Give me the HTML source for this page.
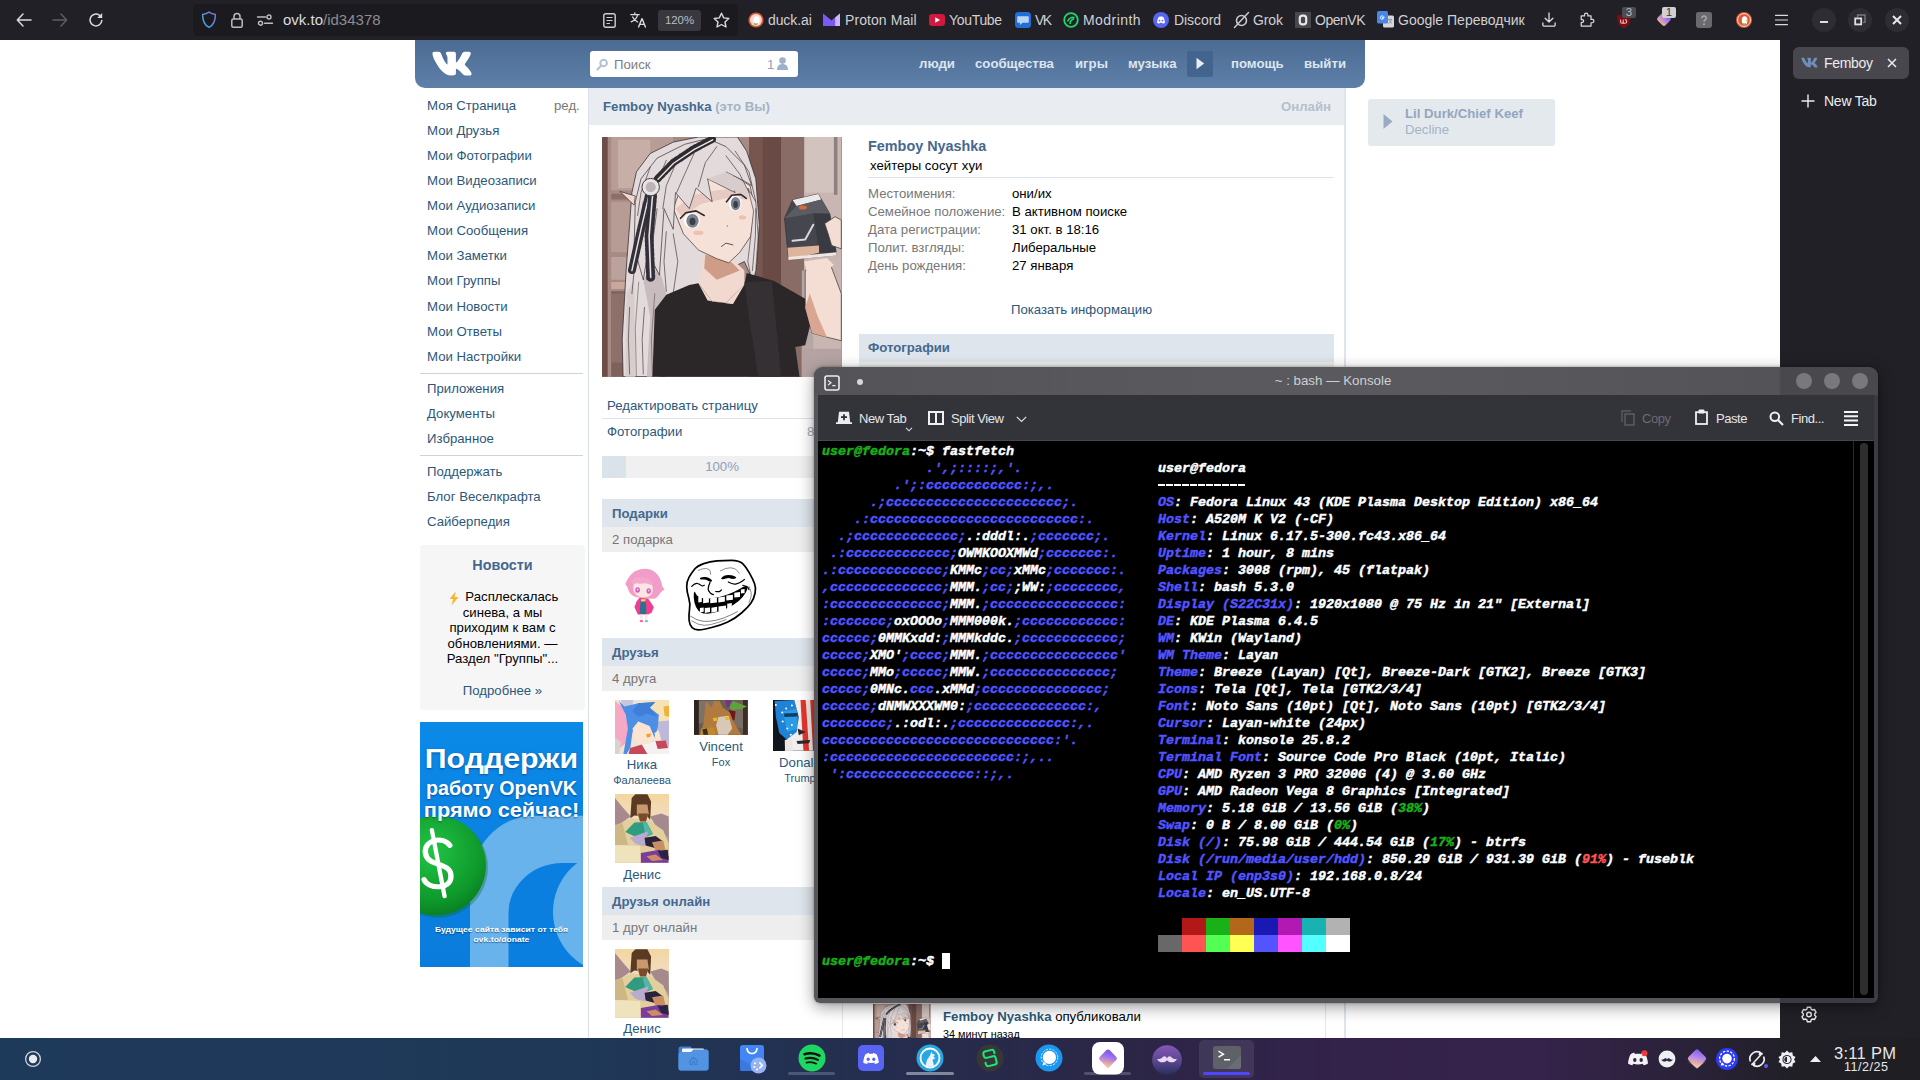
<!DOCTYPE html>
<html><head><meta charset="utf-8"><title>ovk</title>
<style>
*{box-sizing:border-box;margin:0;padding:0}
html,body{width:1920px;height:1080px;overflow:hidden;background:#fff;font-family:"Liberation Sans",sans-serif}
.a{position:absolute;white-space:pre}
svg{position:absolute;overflow:visible}
/* ---------- firefox chrome ---------- */
#ff{position:absolute;left:0;top:0;width:1920px;height:40px;background:#212026;color:#d4d4d8;font-size:14.6px}
#url{position:absolute;left:193px;top:4px;width:545px;height:32px;border-radius:5px;background:#1b1a1f}
#ff .bm{position:absolute;top:11px;white-space:pre;color:#d0d0d5;font-size:14px;line-height:18px}
#side{position:absolute;left:1780px;top:40px;width:140px;height:998px;background:#212026}
/* ---------- page ---------- */
#page{position:absolute;left:0;top:40px;width:1780px;height:998px;background:#fff;overflow:hidden;font-size:13.2px;color:#000}
#page .a{line-height:16px;margin-top:1px}
#hd{position:absolute;left:415px;top:0;width:950px;height:48px;border-radius:0 0 10px 10px;background:linear-gradient(#4c6b93,#5d80a9)}
#hd .n{position:absolute;top:16px;font-weight:700;color:#dde6f0;white-space:pre;line-height:16px}
.lnk{color:#2b587a}
.sb{position:absolute;left:427px;color:#2b587a;white-space:pre;line-height:16px;margin-top:1px}
.gr{color:#777}
.hdr{position:absolute;background:#dee5ec;color:#45688e;font-weight:700;line-height:16px}
.sub{position:absolute;background:#eeeeee;color:#777;line-height:16px}
/* ---------- konsole ---------- */
#kon{position:absolute;left:814px;top:367px;width:1064px;height:636px;border-radius:9px 9px 6px 6px;background:linear-gradient(90deg,#56565b 0,#56565b 966px,#3b3b43 966px);box-shadow:0 4px 16px rgba(0,0,0,.4),0 0 3px rgba(0,0,0,.35);color:#e6e6ea;font-size:13px}
#ktb{position:absolute;left:4px;top:28px;width:1056px;height:45px;background:#33333a}
#kon .t{position:absolute;top:44px;line-height:16px;white-space:pre;letter-spacing:-.45px}
#term{position:absolute;left:4px;top:74px;width:1035px;height:557px;-webkit-text-stroke:.45px;background:#000;font-family:"Liberation Mono",monospace;font-weight:700;font-style:italic;font-size:13.333px;line-height:17px;color:#fff;white-space:pre;overflow:hidden}
#term .l{position:absolute;left:4px;height:17px;white-space:pre}
.b{color:#5454ff}.g{color:#18b218}.r{color:#ff5454}
/* ---------- taskbar ---------- */
#tb{position:absolute;left:0;top:1038px;width:1920px;height:42px;background:linear-gradient(90deg,#1e3a5b 0,#1f3858 30%,#262c4d 48%,#2b2646 58%,#33224a 70%,#35234b 80%,#2a2238 88%,#1f1f25 94%,#1e1e23 100%)}
</style></head><body>

<!-- PAGE -->
<div id="page">

 <div id="hd">
  <svg style="left:15px;top:10px" width="44" height="27" viewBox="3.2 6.6 17.6 11.4"><path fill="#fff" stroke="#fff" stroke-width=".55" stroke-linejoin="round" d="M19.376 17.123h-1.744c-.66 0-.864-.525-2.05-1.727-1.033-1-1.49-1.135-1.744-1.135-.356 0-.458.102-.458.593v1.575c0 .424-.135.678-1.253.678-1.846 0-3.896-1.118-5.335-3.202C4.624 10.857 4.03 8.57 4.03 8.096c0-.254.102-.491.593-.491h1.744c.44 0 .61.203.78.677.863 2.49 2.303 4.675 2.896 4.675.22 0 .322-.102.322-.66V9.721c-.068-1.186-.695-1.287-.695-1.71 0-.204.17-.407.44-.407h2.744c.373 0 .508.203.508.643v3.473c0 .372.17.508.271.508.22 0 .407-.136.813-.542 1.254-1.406 2.151-3.574 2.151-3.574.119-.254.322-.491.763-.491h1.744c.525 0 .644.27.525.643-.22 1.017-2.354 4.031-2.354 4.031-.186.305-.254.44 0 .78.186.254.796.779 1.203 1.253.745.847 1.32 1.558 1.473 2.05.17.49-.085.744-.576.744z"/></svg>
  <div style="position:absolute;left:175px;top:11px;width:208px;height:26px;background:#fff;border-radius:3px"></div>
  <svg style="left:181px;top:18px" width="13" height="13" viewBox="0 0 13 13"><circle cx="7.6" cy="5" r="3.3" fill="none" stroke="#b5c3d3" stroke-width="2"/><path d="M5.2 7.6L1.5 11.5" stroke="#b5c3d3" stroke-width="2.2" stroke-linecap="round"/></svg>
  <div class="a" style="left:199px;top:16px;color:#7d7d7d;line-height:16px">Поиск</div>
  <div class="a" style="left:352px;top:16px;color:#8fa3bb;line-height:16px">1</div>
  <svg style="left:362px;top:17px" width="11" height="13" viewBox="0 0 11 13"><circle cx="5.5" cy="3.6" r="3.3" fill="#9fb1c6"/><path d="M0 13c0-4 2-6 5.5-6s5.5 2 5.5 6z" fill="#9fb1c6"/></svg>
  <div class="n" style="left:504px">люди</div>
  <div class="n" style="left:560px">сообщества</div>
  <div class="n" style="left:660px">игры</div>
  <div class="n" style="left:713px">музыка</div>
  <div style="position:absolute;left:772px;top:11px;width:26px;height:26px;border-radius:3px;background:#43648c"></div>
  <svg style="left:781px;top:17px" width="9" height="13" viewBox="0 0 9 13"><path d="M0.5 0.8v11.4L8.2 6.5z" fill="#e6edf5"/></svg>
  <div class="n" style="left:816px">помощь</div>
  <div class="n" style="left:889px">выйти</div>
 </div>

 <!-- left sidebar -->
 <div class="sb" style="top:57px">Моя Страница</div><div class="a gr" style="left:554px;top:57px">ред.</div>
 <div class="sb" style="top:82px">Мои Друзья</div>
 <div class="sb" style="top:107px">Мои Фотографии</div>
 <div class="sb" style="top:132px">Мои Видеозаписи</div>
 <div class="sb" style="top:157px">Мои Аудиозаписи</div>
 <div class="sb" style="top:182px">Мои Сообщения</div>
 <div class="sb" style="top:207px">Мои Заметки</div>
 <div class="sb" style="top:232px">Мои Группы</div>
 <div class="sb" style="top:258px">Мои Новости</div>
 <div class="sb" style="top:283px">Мои Ответы</div>
 <div class="sb" style="top:308px">Мои Настройки</div>
 <div style="position:absolute;left:420px;top:333px;width:163px;height:1px;background:#cfd3d8"></div>
 <div class="sb" style="top:340px">Приложения</div>
 <div class="sb" style="top:365px">Документы</div>
 <div class="sb" style="top:390px">Избранное</div>
 <div style="position:absolute;left:420px;top:415px;width:163px;height:1px;background:#cfd3d8"></div>
 <div class="sb" style="top:423px">Поддержать</div>
 <div class="sb" style="top:448px">Блог Веселкрафта</div>
 <div class="sb" style="top:473px">Сайберпедия</div>

 <!-- news box -->
 <div style="position:absolute;left:420px;top:505px;width:165px;height:165px;background:#f6f6f6;border-radius:4px"></div>
 <div class="a" style="left:420px;top:515px;width:165px;text-align:center;font-weight:700;font-size:14.4px;color:#45688e;line-height:18px">Новости</div>
 <div class="a" style="left:420px;top:548px;width:165px;text-align:center;color:#000;line-height:15.6px"><svg style="position:relative;display:inline-block;vertical-align:-2px;margin:-3px 1px -3px 0" width="14" height="15" viewBox="-1.500 -0.500 14 15"><path d="M7.2 0L1 7.6h3.6L3 14l7-8.4H6.2z" fill="#f9b530"/></svg> Расплескалась
синева, а мы
приходим к вам с
обновлениями. —
Раздел "Группы"...</div>
 <div class="a lnk" style="left:420px;top:642px;width:165px;text-align:center">Подробнее »</div>

 <!-- ad banner -->
 <div id="ad" style="position:absolute;left:420px;top:682px;width:163px;height:245px;background:linear-gradient(#0b8ae8,#0a80e0 60%,#0a7cdc);overflow:hidden">
  <svg style="left:0;top:0" width="163" height="245" viewBox="0 0 163 245">
   <defs><radialGradient id="gc" cx=".45" cy=".35" r=".7"><stop offset="0" stop-color="#22c445"/><stop offset=".7" stop-color="#0f9a2c"/><stop offset="1" stop-color="#087a20"/></radialGradient></defs>
   <rect x="50" y="93.700" width="300" height="400" rx="64" ry="70" fill="#69b3ec"/><rect x="88.500" y="141" width="300" height="400" rx="54" ry="50" fill="#0a7fdf"/><circle cx="195" cy="190" r="62" fill="#69b3ec"/>
   <circle cx="16.1" cy="143.5" r="50.3" fill="#0a6a1c" opacity=".35" transform="translate(1.5 2)"/>
   <circle cx="16.1" cy="143.5" r="49.8" fill="url(#gc)"/>
   <g fill="none" stroke="#fff" stroke-width="5" stroke-linecap="round" transform="translate(-1 0) scale(1.08 1)"><path d="M28.5 123.3 C22.5 113.9 4.7 117.4 5.9 130.5 C7.1 145.9 29.6 138.8 29.6 154.2 C29.6 168.4 8.3 167.2 4.7 157.7"/><path d="M11.9 107.9 L23.7 174.3" stroke-width="4"/></g>
  </svg>
  <div class="a" style="left:0;top:20.900px;width:163px;text-align:center;font-weight:700;font-size:27.400px;line-height:normal;transform:scaleX(1.105);color:#fff;text-shadow:0 1px 2px rgba(0,40,90,.55);margin:0">Поддержи</div>
  <div class="a" style="left:0;top:53.700px;width:163px;text-align:center;font-weight:700;font-size:20.500px;line-height:normal;transform:scaleX(.962);color:#fff;text-shadow:0 1px 2px rgba(0,40,90,.55);margin:0">работу OpenVK</div>
  <div class="a" style="left:0;top:76px;width:163px;text-align:center;font-weight:700;font-size:20.500px;line-height:normal;transform:scaleX(1.06);color:#fff;text-shadow:0 1px 2px rgba(0,40,90,.55);margin:0">прямо сейчас!</div>
  <div class="a" style="left:0;top:202.900px;width:163px;text-align:center;font-weight:700;font-size:7.600px;line-height:10.100px;transform:scaleX(1.13);color:#fff;text-shadow:0 1px 1px rgba(0,40,90,.6);margin:0">Будущее сайта зависит от тебя
ovk.to/donate</div>
 </div>
 <!-- main column -->
 <div style="position:absolute;left:588px;top:48px;width:1px;height:950px;background:#d9e0e7"></div>
 <div style="position:absolute;left:1344px;top:48px;width:2px;height:950px;background:#dfe5ec"></div>
 <div style="position:absolute;left:589px;top:48px;width:755px;height:37px;background:#e9edf1"></div>
 <div class="a" style="left:603px;top:58px;font-weight:700;color:#45688e">Femboy Nyashka <span style="color:#a3b3c6">(это Вы)</span></div>
 <div class="a" style="left:1231px;width:100px;text-align:right;top:58px;font-weight:700;color:#b4c0cd">Онлайн</div>

 <!-- avatar -->
 <div id="ava" style="position:absolute;left:602px;top:97px;width:240px;height:240px;background:#b79a93;overflow:hidden"><svg style="left:0;top:0" width="240" height="240" viewBox="0 0 240 240"><g id="avg"><rect width="240" height="240" fill="#a88a84"/><path d="M0.0 0.0 L5.7 0.0 L5.7 239.7 L0.0 239.7z" fill="#6e4d48" /><path d="M9.2 0.0 L71.2 0.0 L71.2 53.3 L9.2 53.3z" fill="#b89d96" /><path d="M16.1 2.8 L48.2 2.8 L48.2 51.0 L16.1 51.0z" fill="#c7afa8" /><path d="M9.2 56.7 L71.2 56.7 L71.2 62.5 L9.2 62.5z" fill="#8e6e68" /><path d="M9.2 64.8 L64.3 64.8 L64.3 115.3 L9.2 115.3z" fill="#b79c95" /><path d="M9.2 119.9 L64.3 119.9 L64.3 142.8 L9.2 142.8z" fill="#bba29c" /><path d="M9.2 145.1 L64.3 145.1 L64.3 152.0 L9.2 152.0z" fill="#c9a79b" /><path d="M9.2 154.3 L64.3 154.3 L64.3 239.7 L9.2 239.7z" fill="#7f615c" /><path d="M9.2 156.6 L41.3 156.6 L41.3 225.5 L9.2 225.5z" fill="#8d706a" /><path d="M147.0 0.0 L202.1 0.0 L202.1 239.7 L147.0 239.7z" fill="#76564f" /><path d="M160.7 0.0 L179.1 0.0 L179.1 156.6 L160.7 156.6z" fill="#6a4a45" /><path d="M179.1 0.0 L202.1 0.0 L202.1 239.7 L179.1 239.7z" fill="#8a6c66" /><path d="M202.1 0.0 L239.3 0.0 L239.3 239.7 L202.1 239.7z" fill="#c9b6b2" /><path d="M203.2 0.0 L231.9 0.0 L231.9 55.6 L203.2 55.6z" fill="#d3c3bf" /><path d="M231.9 0.0 L235.4 0.0 L235.4 57.9 L231.9 57.9z" fill="#8f7f80" /><path d="M199.8 133.6 L211.3 133.6 L211.3 239.7 L199.8 239.7z" fill="#b7a6a6" /><path d="M199.8 211.7 L239.3 211.7 L239.3 239.7 L199.8 239.7z" fill="#b5a3a3" /><path d="M29.9 55.6 L34.4 34.9 L48.2 16.5 L71.2 5.1 L96.4 0.0 L135.5 0.0 L144.7 14.2 L153.8 41.8 L157.3 87.7 L155.0 124.5 L151.5 145.1 L142.4 124.5 L124.0 133.6 L91.8 156.6 L71.2 170.4 L62.0 239.7 L21.1 239.7 L20.2 202.5 L24.1 133.6 L27.6 87.7z" fill="#e3dadb" stroke="#3b3033" stroke-width="0.8"/><path d="M41.3 142.8 L55.1 124.5 L64.3 156.6 L57.4 239.7 L44.8 239.7 L48.2 179.6z" fill="#c9bcbe" /><path d="M24.8 156.6 L32.1 142.8 L33.3 239.7 L23.4 239.7z" fill="#d8cdcd" /><path d="M36.7 145.1 L33.3 191.0 L34.4 239.7" fill="none" stroke="#4a3d40" stroke-width="0.5" stroke-linecap="round" stroke-linejoin="round" /><path d="M52.8 156.6 L49.4 202.5 L50.5 239.7" fill="none" stroke="#4a3d40" stroke-width="0.5" stroke-linecap="round" stroke-linejoin="round" /><path d="M17.9 54.4 L33.3 59.0 L32.1 68.2z" fill="#f0d6cc" stroke="#3b3033" stroke-width="0.7"/><path d="M103.3 115.3 L133.2 124.5 L142.4 133.6 L142.4 147.4 L124.0 165.8 L105.6 163.5 L96.4 145.1z" fill="#f1d9cf" /><path d="M103.3 117.6 L129.7 125.6 L137.8 133.6 L114.8 142.8 L102.2 131.3z" fill="#cf9c88" /><path d="M71.2 71.6 L78.1 53.3 L101.0 41.8 L133.2 39.5 L148.1 48.7 L152.7 71.6 L148.8 99.2 L137.8 115.3 L126.8 125.8 L114.8 121.7 L96.4 113.0 L81.5 96.9z" fill="#f6e1d8" stroke="#3b3033" stroke-width="0.7"/><path d="M73.5 71.6 L91.8 57.9 L114.8 53.3 L142.4 51.0 L147.0 62.5 L124.0 61.3 L98.7 67.0 L80.4 80.8z" fill="#e6c9c2" /><ellipse cx="96.4" cy="95.8" rx="5.1" ry="2.3" fill="#eeb7a8" opacity=".8"/><ellipse cx="140.5" cy="80.4" rx="3.7" ry="2.1" fill="#eeb7a8" opacity=".8"/><ellipse cx="90.0" cy="83.6" rx="8.3" ry="7.6" fill="#fff" /><ellipse cx="90.5" cy="83.8" rx="6.2" ry="6.9" fill="#7d8290" /><ellipse cx="90.5" cy="84.5" rx="3.0" ry="3.7" fill="#3b3d48" /><path d="M78.5 81.3 L83.8 75.8 L94.1 73.9 L102.2 78.5" fill="none" stroke="#2e2628" stroke-width="1.6" stroke-linecap="round" stroke-linejoin="round" /><ellipse cx="133.2" cy="65.9" rx="6.4" ry="7.8" fill="#fff" /><ellipse cx="133.6" cy="66.6" rx="4.8" ry="6.7" fill="#7d8290" /><ellipse cx="133.6" cy="67.5" rx="2.3" ry="3.4" fill="#3b3d48" /><path d="M124.5 64.8 L129.7 58.3 L138.9 57.4 L144.2 61.3" fill="none" stroke="#2e2628" stroke-width="1.6" stroke-linecap="round" stroke-linejoin="round" /><path d="M119.4 109.5 L124.0 106.1 L130.9 107.9" fill="none" stroke="#5a4042" stroke-width="0.9" stroke-linecap="round" stroke-linejoin="round" /><circle cx="125.4" cy="88.9" r="0.7" fill="#8a6a66" /><path d="M33.3 64.8 L39.0 41.8 L55.1 21.1 L82.7 7.3 L105.6 1.6 L124.0 9.6 L142.4 28.0 L149.7 48.7 L142.4 44.1 L124.0 34.9 L133.2 55.6 L114.8 46.4 L105.6 41.8 L110.2 64.8 L94.1 51.0 L87.3 71.6 L73.5 55.6 L71.2 92.3 L62.0 71.6 L57.4 138.2 L45.9 115.3 L41.3 142.8 L32.1 110.7z" fill="#e3dadb" stroke="#3b3033" stroke-width="0.7"/><path d="M105.6 41.8 L124.0 34.9 L142.4 45.2 L147.0 60.2 L124.0 49.8z" fill="#d8cccc" /><path d="M145.8 51.0 L153.8 64.8 L156.1 99.2 L153.8 133.6 L150.4 146.3 L145.8 124.5 L148.8 99.2 L151.5 73.9z" fill="#e3dadb" stroke="#3b3033" stroke-width="0.6"/><path d="M41.3 64.8 L34.4 110.7 L29.9 156.6" fill="none" stroke="#4a3d42" stroke-width="0.7" stroke-linecap="round" stroke-linejoin="round" /><path d="M55.1 71.6 L49.4 115.3 L44.8 142.8" fill="none" stroke="#4a3d42" stroke-width="0.7" stroke-linecap="round" stroke-linejoin="round" /><path d="M64.3 94.6 L62.0 124.5 L64.3 154.3" fill="none" stroke="#4a3d42" stroke-width="0.7" stroke-linecap="round" stroke-linejoin="round" /><path d="M71.2 96.9 L75.8 124.5 L71.2 156.6" fill="none" stroke="#4a3d42" stroke-width="0.7" stroke-linecap="round" stroke-linejoin="round" /><path d="M124.0 18.8 L137.8 37.2 L147.0 55.6" fill="none" stroke="#4a3d42" stroke-width="0.7" stroke-linecap="round" stroke-linejoin="round" /><path d="M133.2 14.2 L147.0 34.9 L153.8 64.8" fill="none" stroke="#4a3d42" stroke-width="0.7" stroke-linecap="round" stroke-linejoin="round" /><path d="M153.8 71.6 L153.4 99.2 L150.4 133.6" fill="none" stroke="#4a3d42" stroke-width="0.7" stroke-linecap="round" stroke-linejoin="round" /><path d="M27.6 170.4 L26.4 202.5 L27.6 237.0" fill="none" stroke="#4a3d42" stroke-width="0.7" stroke-linecap="round" stroke-linejoin="round" /><path d="M42.5 170.4 L40.2 202.5 L41.3 237.0" fill="none" stroke="#4a3d42" stroke-width="0.7" stroke-linecap="round" stroke-linejoin="round" /><path d="M57.4 179.6 L55.6 209.4 L56.9 237.0" fill="none" stroke="#4a3d42" stroke-width="0.7" stroke-linecap="round" stroke-linejoin="round" /><path d="M48.2 30.3 L39.0 55.6 L35.6 78.5" fill="none" stroke="#4a3d42" stroke-width="0.7" stroke-linecap="round" stroke-linejoin="round" /><path d="M64.3 23.4 L50.5 55.6 L44.8 92.3" fill="none" stroke="#4a3d42" stroke-width="0.7" stroke-linecap="round" stroke-linejoin="round" /><path d="M78.1 16.5 L64.3 48.7 L60.8 71.6" fill="none" stroke="#4a3d42" stroke-width="0.7" stroke-linecap="round" stroke-linejoin="round" /><path d="M94.1 11.9 L82.7 37.2 L74.6 55.6" fill="none" stroke="#4a3d42" stroke-width="0.7" stroke-linecap="round" stroke-linejoin="round" /><path d="M114.8 9.6 L103.3 25.7 L96.4 49.8" fill="none" stroke="#4a3d42" stroke-width="0.7" stroke-linecap="round" stroke-linejoin="round" /><path d="M55.6 41.8 L71.2 25.7 L91.8 11.9 L110.2 2.3" fill="none" stroke="#2f2b31" stroke-width="7.5" stroke-linecap="round" stroke-linejoin="round" stroke-dasharray="2.2 2.2"/><path d="M55.6 41.8 L71.2 25.7 L91.8 11.9 L110.2 2.3" fill="none" stroke="#2f2b31" stroke-width="4.6" stroke-linecap="round" stroke-linejoin="round" /><path d="M56.0 42.3 L71.6 26.2 L92.3 12.4 L110.7 2.8" fill="none" stroke="#ece8e8" stroke-width="1.3" stroke-linecap="round" stroke-linejoin="round" /><path d="M47.1 57.9 L39.0 92.3 L29.9 133.6" fill="none" stroke="#33303a" stroke-width="8" stroke-linecap="round" stroke-linejoin="round" stroke-dasharray="2.2 2.2"/><path d="M47.1 57.9 L39.0 92.3 L29.9 133.6" fill="none" stroke="#33303a" stroke-width="5" stroke-linecap="round" stroke-linejoin="round" /><path d="M47.1 57.9 L39.0 92.3 L29.9 133.6" fill="none" stroke="#e4dfe0" stroke-width="1.5" stroke-linecap="round" stroke-linejoin="round" /><path d="M50.5 59.0 L47.1 99.2 L48.7 140.5" fill="none" stroke="#33303a" stroke-width="9" stroke-linecap="round" stroke-linejoin="round" stroke-dasharray="2.2 2.2"/><path d="M50.5 59.0 L47.1 99.2 L48.7 140.5" fill="none" stroke="#33303a" stroke-width="6" stroke-linecap="round" stroke-linejoin="round" /><path d="M50.5 59.0 L47.1 99.2 L48.7 140.5" fill="none" stroke="#e4dfe0" stroke-width="1.6" stroke-linecap="round" stroke-linejoin="round" /><circle cx="48.7" cy="50.1" r="8.7" fill="#e9e5e5" stroke="#3a3338" stroke-width="0.9"/><circle cx="48.7" cy="50.1" r="5.1" fill="#bdb3b6" /><path d="M52.8 172.7 L64.3 157.7 L87.3 147.9 L96.4 146.3 L110.2 164.6 L130.9 166.9 L142.4 147.4 L144.7 135.9 L172.2 144.0 L203.2 161.7 L213.5 166.9 L203.2 208.3 L193.3 209.9 L197.5 239.7 L50.5 239.7 L51.7 202.5z" fill="#2b2729" /><path d="M142.4 145.1 L169.9 144.0 L179.1 239.7 L156.1 239.7 L147.0 179.6z" fill="#343033" /><path d="M96.4 146.3 L110.2 164.6 L130.9 166.9 L142.4 147.4 L124.0 166.2 L105.6 163.5z" fill="#f1d9cf" /><path d="M203.2 133.6 L215.8 126.8 L227.3 124.5 L239.3 156.6 L239.3 203.7 L225.0 200.2 L210.1 196.1 L203.2 170.4z" fill="#f4ddd3" stroke="#3b3033" stroke-width="0.7"/><path d="M203.2 170.4 L210.1 196.1 L225.0 200.2 L215.8 179.6 L207.8 156.6z" fill="#d9a692" /><path d="M182.5 81.3 L190.6 62.9 L216.3 56.9 L227.8 76.7 L234.7 118.0 L186.5 122.6z" fill="#46474e" stroke="#2a2a30" stroke-width="0.6"/><path d="M190.6 62.9 L216.3 56.9 L219.3 62.5 L194.7 68.9z" fill="#ecebeb" /><path d="M194.7 68.9 L219.3 62.5 L227.8 76.7 L211.3 76.2 L182.5 81.3z" fill="#5b5c63" /><ellipse cx="200.9" cy="70.5" rx="4.1" ry="2.1" fill="#d9673a" /><path d="M211.3 76.2 L227.8 76.7 L234.7 118.0 L217.0 115.3z" fill="#3a3b42" /><path d="M185.5 110.7 L217.0 108.4 L217.0 115.7 L186.5 122.6z" fill="#dcb59c" /><path d="M186.5 119.9 L234.7 115.3 L234.7 118.5 L186.5 123.1z" fill="#efe6e2" /><path d="M190.6 103.8 L203.2 102.6 L211.3 87.7" fill="none" stroke="#d8d8dc" stroke-width="2.0" stroke-linecap="round" stroke-linejoin="round" /><path d="M222.7 86.6 L233.1 79.7 L239.3 83.1 L239.3 111.8 L229.6 108.4 L226.2 96.9z" fill="#f4ddd3" stroke="#3b3033" stroke-width="0.7"/><path d="M202.1 124.5 L225.0 121.0 L231.9 127.9 L225.0 133.6 L204.4 133.6z" fill="#f4ddd3" /></g></svg></div>

 <div class="a lnk" style="left:607px;top:357px">Редактировать страницу</div>
 <div style="position:absolute;left:602px;top:378px;width:240px;height:1px;background:#dde2e8"></div>
 <div class="a lnk" style="left:607px;top:383px">Фотографии</div>
 <div class="a" style="left:807px;top:383px;color:#9eaaba">8</div>
 <div style="position:absolute;left:602px;top:416px;width:240px;height:22px;background:#f0f0f0"></div>
 <div style="position:absolute;left:602px;top:416px;width:24px;height:22px;background:#dae2ea"></div>
 <div class="a" style="left:602px;top:418px;width:240px;text-align:center;color:#8ba1bc">100%</div>

 <div class="hdr" style="left:602px;top:459px;width:240px;height:28px"></div>
 <div class="a" style="left:612px;top:465px;font-weight:700;color:#45688e">Подарки</div>
 <div class="sub" style="left:602px;top:487px;width:240px;height:25px"></div>
 <div class="a gr" style="left:612px;top:491px">2 подарка</div>
 <div id="gifts"><svg style="left:600px;top:512px" width="220" height="88" viewBox="0 0 220 88"><path d="M26.1 33.5 Q24.6 32.7 26.6 28.9 Q28.6 25.2 31.5 22.1 Q34.4 18.9 39.5 17.5 Q44.7 16.0 49.3 17.2 Q53.9 18.3 57.3 22.3 Q60.7 26.4 61.6 30.9 Q62.4 35.5 63.9 36.4 Q65.3 37.2 63.0 38.4 Q60.7 39.5 59.0 42.7 Q57.3 45.8 55.0 46.4 Q52.7 47.0 43.5 46.1 Q34.4 45.3 31.5 42.7 Q28.6 40.1 28.1 37.2 Q27.5 34.4 26.1 33.5z" fill="#f29cc8"/><path d="M33.3 37.0 Q33.2 34.4 33.8 32.1 Q34.4 29.8 39.0 29.2 Q43.5 28.6 47.8 30.1 Q52.1 31.5 52.7 35.2 Q53.3 39.0 51.9 41.5 Q50.4 44.1 47.0 45.0 Q43.5 45.8 40.1 45.0 Q36.7 44.1 35.1 41.8 Q33.5 39.5 33.3 37.0z" fill="#fbe6e1"/><path d="M31.8 31.2 Q30.9 28.6 34.4 26.6 Q37.8 24.6 43.0 25.2 Q48.1 25.8 51.0 28.4 Q53.9 30.9 52.1 32.1 Q50.4 33.2 48.1 32.1 Q45.8 30.9 43.0 31.5 Q40.1 32.1 37.8 31.5 Q35.5 30.9 34.1 32.4 Q32.7 33.8 31.8 31.2z" fill="#f5a6cf"/><ellipse cx="37.6" cy="38.0" rx="2.3" ry="2.8" fill="#d75ac0"/><ellipse cx="48.7" cy="39.0" rx="2.2" ry="2.8" fill="#d75ac0"/><ellipse cx="37.6" cy="37.6" rx="0.9" ry="1.1" fill="#f8c9ee"/><ellipse cx="48.7" cy="38.5" rx="0.9" ry="1.1" fill="#f8c9ee"/><path d="M39.5 45.8 L48.1 46.4 L53.9 55.0 L51.6 60.7 L48.1 62.4 L37.8 62.4 L34.4 55.0 L36.7 49.3z" fill="#ee3f93"/><path d="M40.7 48.1 L45.8 48.1 L46.4 61.9 L39.5 61.9z" fill="#2f6f8f"/><path d="M41.0 47.2 L45.6 47.2 L45.6 49.5 L41.0 49.5z" fill="#f0d94a"/><path d="M40.1 62.4 L42.6 62.4 L42.6 68.8 L40.3 68.8z" fill="#fbe6e1"/><path d="M44.9 62.4 L47.4 62.4 L47.4 68.8 L45.1 68.8z" fill="#fbe6e1"/><path d="M39.9 68.2 L42.9 68.2 L42.9 70.1 L39.9 70.1z" fill="#ee5fa0"/><path d="M44.9 68.2 L47.9 68.2 L47.9 70.1 L44.9 70.1z" fill="#58c8d8"/><path d="M89.1 25.2 Q91.7 20.6 94.5 17.2 Q97.4 13.8 103.7 11.6 Q110.0 9.4 116.9 8.8 Q123.8 8.3 131.5 8.3 Q139.2 8.3 142.7 11.6 Q146.1 14.9 149.5 21.2 Q153.0 27.5 154.5 31.5 Q156.1 35.5 155.1 41.0 Q154.1 46.4 151.0 51.0 Q147.8 55.6 141.5 61.0 Q135.2 66.5 127.8 69.9 Q120.3 73.3 111.7 75.5 Q103.1 77.7 98.8 77.9 Q94.5 78.1 92.1 75.7 Q89.7 73.3 89.1 68.5 Q88.6 63.6 89.5 57.6 Q90.5 51.6 88.7 45.8 Q86.9 40.1 86.7 34.9 Q86.6 29.8 89.1 25.2z" fill="#fff" stroke="#000" stroke-width="1.7" stroke-linejoin="round"/><path d="M93.8 41.8 Q94.2 37.8 95.8 41.5 Q97.4 45.3 102.0 46.1 Q106.6 47.0 114.0 45.9 Q121.5 44.9 128.3 42.2 Q135.2 39.5 139.5 37.0 Q143.8 34.4 145.9 33.8 Q148.0 33.2 147.4 36.7 Q146.7 40.1 142.9 44.7 Q139.2 49.3 133.2 53.0 Q127.2 56.7 119.2 59.3 Q111.1 61.9 106.0 61.6 Q100.8 61.3 98.3 58.4 Q95.7 55.6 94.5 50.7 Q93.4 45.8 93.8 41.8z" fill="#000"/><path d="M98.3 44.9 L101.8 44.5 L101.8 50.0 L98.3 50.4z" fill="#fff"/><path d="M103.1 46.1 L108.9 45.4 L108.9 50.6 L103.1 51.3z" fill="#fff"/><path d="M110.2 46.3 L116.9 45.5 L116.9 50.5 L110.2 51.3z" fill="#fff"/><path d="M118.3 45.4 L124.9 44.6 L124.9 49.6 L118.3 50.4z" fill="#fff"/><path d="M126.3 43.5 L132.9 42.7 L132.9 47.8 L126.3 48.6z" fill="#fff"/><path d="M134.3 40.8 L140.0 40.1 L140.0 44.9 L134.3 45.6z" fill="#fff"/><path d="M140.9 37.6 L144.6 37.1 L144.6 41.0 L140.9 41.5z" fill="#fff"/><path d="M99.9 55.9 L103.7 55.4 L103.7 59.7 L99.9 60.5z" fill="#fff"/><path d="M104.8 56.1 L110.0 55.4 L110.0 59.9 L104.8 61.0z" fill="#fff"/><path d="M111.4 55.7 L117.1 54.8 L117.1 59.6 L111.4 60.7z" fill="#fff"/><path d="M118.5 54.5 L126.0 53.4 L126.0 58.1 L118.5 59.6z" fill="#fff"/><path d="M127.2 51.8 L131.8 51.1 L131.8 55.5 L127.2 56.4z" fill="#fff"/><path d="M100.3 27.2 Q99.1 26.6 100.8 25.6 Q102.6 24.6 105.7 25.0 Q108.9 25.4 110.9 27.3 Q112.9 29.2 111.4 29.6 Q110.0 30.0 108.0 28.8 Q106.0 27.5 103.7 27.6 Q101.4 27.7 100.3 27.2z" fill="#000"/><path d="M122.0 27.2 Q120.3 26.9 122.3 24.9 Q124.3 22.9 128.1 22.9 Q131.8 22.9 134.6 24.3 Q137.5 25.8 135.2 26.5 Q132.9 27.3 130.6 26.4 Q128.3 25.4 126.0 26.5 Q123.8 27.5 122.0 27.2z" fill="#000"/><path d="M91.7 34.4 Q95.1 30.9 97.4 31.5 Q99.7 32.1 100.8 33.2 Q102.0 34.4 103.1 33.8 L104.3 33.2" fill="none" stroke="#000" stroke-width="1.2" stroke-linecap="round"/><path d="M110.0 30.4 Q107.1 36.7 108.9 39.2 Q110.6 41.8 112.0 42.2 L113.4 42.6" fill="none" stroke="#000" stroke-width="1.3" stroke-linecap="round"/><path d="M115.7 39.5 Q119.2 40.1 120.3 39.0 L121.5 37.8" fill="none" stroke="#000" stroke-width="1.2" stroke-linecap="round"/><path d="M128.3 30.0 Q132.9 32.7 136.4 31.8 Q139.8 30.9 142.1 29.2 L144.4 27.5" fill="none" stroke="#000" stroke-width="1.2" stroke-linecap="round"/><path d="M142.7 33.2 Q147.8 34.4 148.4 36.1 L149.0 37.8" fill="none" stroke="#000" stroke-width="1.1" stroke-linecap="round"/><path d="M98.5 18.3 Q103.1 16.0 106.6 16.6 Q110.0 17.2 110.3 19.8 L110.6 22.3" fill="none" stroke="#000" stroke-width="0.45" stroke-linecap="round"/><path d="M120.3 18.9 Q126.0 15.5 130.6 15.8 Q135.2 16.0 137.2 18.6 L139.2 21.2" fill="none" stroke="#000" stroke-width="0.45" stroke-linecap="round"/><path d="M90.5 64.2 Q97.4 68.8 103.1 69.3 Q108.9 69.9 116.3 68.2 Q123.8 66.5 130.6 63.0 L137.5 59.6" fill="none" stroke="#000" stroke-width="0.5" stroke-linecap="round"/><path d="M91.7 68.8 Q98.5 73.3 104.3 73.3 Q110.0 73.3 118.0 70.5 L126.0 67.6" fill="none" stroke="#000" stroke-width="0.45" stroke-linecap="round"/><path d="M149.0 34.4 Q152.4 41.3 150.7 45.8 L149.0 50.4" fill="none" stroke="#000" stroke-width="0.45" stroke-linecap="round"/></svg></div>

 <div class="hdr" style="left:602px;top:598px;width:240px;height:28px"></div>
 <div class="a" style="left:612px;top:604px;font-weight:700;color:#45688e">Друзья</div>
 <div class="sub" style="left:602px;top:626px;width:240px;height:25px"></div>
 <div class="a gr" style="left:612px;top:630px">4 друга</div>
 <div id="friends"><svg style="left:615px;top:660px" width="54" height="54" viewBox="0 0 54 54"><rect width="54" height="54" fill="#efe3d6"/><path d="M34.7 0.0 L54.0 0.0 L54.0 20.4 L42.7 21.5 L37.0 11.2z" fill="#f6e2b4" /><path d="M48.5 6.6 L54.0 5.5 L54.0 17.0 L49.6 15.8z" fill="#f0b23a" /><path d="M42.7 21.5 L54.0 20.4 L54.0 53.9 L43.9 53.9z" fill="#bdb9da" /><path d="M6.1 0.0 L18.7 0.0 L16.4 7.8 L7.2 8.9z" fill="#c9c6de" /><path d="M0.0 0.9 L8.4 7.8 L14.1 28.4 L11.8 42.2 L4.9 47.9 L0.0 51.3z" fill="#f6a9c4" /><path d="M0.0 37.6 L6.1 42.2 L3.8 53.9 L0.0 53.9z" fill="#d9d3cf" /><path d="M3.8 0.9 L9.5 6.6 L23.3 3.2 L40.4 2.1 L34.7 7.8 L43.9 14.7 L42.7 28.4 L39.3 37.6 L34.7 28.4 L23.3 21.5 L17.5 31.9 L15.2 49.0 L11.8 53.9 L8.4 53.9 L12.9 28.4 L10.7 14.7z" fill="#4d8fe6" /><path d="M23.3 3.2 L40.4 2.1 L34.7 7.8 L42.7 17.0 L32.4 13.5 L23.3 17.0 L17.5 11.2z" fill="#3f7fd8" /><path d="M17.5 28.4 L23.3 21.5 L34.7 26.1 L39.3 37.6 L34.7 43.3 L26.7 44.5 L19.8 39.9z" fill="#fbe4d2" /><path d="M31.3 34.1 L35.9 33.6 L35.3 37.0 L31.9 37.4z" fill="#f0a030" /><path d="M39.3 33.0 L43.9 30.7 L46.2 39.9 L41.6 42.2z" fill="#fbe4d2" /><path d="M15.2 47.9 L26.7 44.5 L34.7 43.3 L42.7 39.9 L50.8 41.0 L54.0 47.9 L54.0 53.9 L11.8 53.9z" fill="#f4f1f3" /><path d="M15.2 47.9 L26.7 44.5 L32.4 53.9 L13.5 53.9z" fill="#c8475a" /><path d="M40.4 41.0 L50.8 40.4 L53.1 47.9 L42.7 49.0z" fill="#c8475a" /></svg>
<svg style="left:694px;top:660px" width="54" height="35" viewBox="0 0 54 35"><rect width="54" height="35" fill="#6b5e52"/><path d="M0.0 0.0 L4.9 0.0 L4.9 34.7 L0.0 34.7z" fill="#2e241e" /><path d="M49.0 0.0 L53.6 0.0 L53.6 34.7 L49.0 34.7z" fill="#3a2e28" /><path d="M4.9 0.9 L24.4 0.9 L24.4 17.0 L4.9 23.8z" fill="#7d7268" /><path d="M35.9 7.8 L49.0 4.4 L49.0 28.4 L38.2 26.1z" fill="#7a6e64" /><path d="M34.7 6.6 L39.3 0.9 L53.1 6.6 L47.3 8.9 L38.2 10.1z" fill="#5ea23a" /><path d="M31.3 0.0 L37.0 0.0 L35.9 6.6 L33.0 7.8z" fill="#7a2f8a" /><path d="M34.7 10.1 L41.6 11.2 L40.4 20.4 L35.9 19.3z" fill="#6e1818" /><path d="M11.8 0.9 L17.5 7.8 L19.8 0.9 L25.6 0.9 L29.0 7.8 L35.9 12.4 L39.3 21.5 L47.3 34.7 L7.2 34.7 L9.5 22.7 L10.7 12.4z" fill="#b17a3e" /><path d="M24.4 17.0 L34.7 15.8 L38.2 28.4 L33.6 34.7 L24.4 34.7 L22.1 25.0z" fill="#d9c8b8" /><path d="M7.2 28.4 L19.8 27.3 L22.1 34.7 L6.1 34.7z" fill="#c08a2a" /><path d="M8.4 29.6 L12.9 28.4 L14.1 34.7 L9.5 34.7z" fill="#3a2a1a" /><path d="M18.7 18.1 L23.3 17.5 L22.7 21.0 L19.3 21.0z" fill="#e8b820" /><path d="M31.3 17.0 L35.3 16.7 L34.7 19.8 L31.5 20.2z" fill="#e8b820" /></svg>
<svg style="left:773px;top:660px" width="54" height="51" viewBox="0 0 54 51"><rect width="54" height="51" fill="#0f151c"/><path d="M1.7 0.9 L21.2 0.0 L25.8 17.0 L23.5 31.9 L14.3 39.9 L6.3 33.0 L2.9 17.0z" fill="#1f82d4" /><path d="M9.7 11.2 L23.5 8.9 L24.6 28.4 L14.3 31.9z" fill="#2b9be6" /><path d="M21.2 0.0 L54.0 0.0 L54.0 50.8 L11.5 50.8 L13.2 39.9 L23.5 31.9 L25.8 17.0z" fill="#f1efee" /><path d="M27.5 0.0 L32.7 0.0 L36.1 50.8 L30.4 50.8z" fill="#e8352a" /><path d="M37.2 0.0 L42.4 0.0 L45.8 50.8 L40.1 50.8z" fill="#e8352a" /><path d="M47.0 0.0 L52.1 0.0 L55.6 50.8 L49.8 50.8z" fill="#e8352a" /><path d="M11.5 39.9 L18.9 39.3 L20.1 50.8 L11.5 50.8z" fill="#e9e6e4" /><path d="M0.6 39.9 L11.5 39.9 L12.0 50.8 L0.6 50.8z" fill="#11161c" /><path d="M10.9 13.5 L24.6 12.9 L24.6 16.4 L11.5 17.0z" fill="#143a66" /><path d="M24.6 28.4 L32.7 31.9 L25.8 35.3z" fill="#2a2a30" /><path d="M23.5 41.0 L37.2 39.9 L36.1 43.3 L24.6 43.9z" fill="#2a2a30" /><ellipse cx="2.9" cy="4.9" rx="1.0" ry="1.0" fill="#fff" /><ellipse cx="13.2" cy="8.4" rx="1.0" ry="1.0" fill="#fff" /><ellipse cx="9.2" cy="12.4" rx="1.0" ry="1.0" fill="#fff" /><ellipse cx="18.9" cy="5.5" rx="1.0" ry="1.0" fill="#fff" /><ellipse cx="9.7" cy="21.5" rx="1.0" ry="1.0" fill="#fff" /><ellipse cx="18.9" cy="25.0" rx="1.0" ry="1.0" fill="#fff" /><ellipse cx="14.3" cy="28.4" rx="1.0" ry="1.0" fill="#fff" /><ellipse cx="17.8" cy="34.7" rx="1.0" ry="1.0" fill="#fff" /></svg>
<svg style="left:615px;top:754px" width="54" height="69" viewBox="0 0 54 69"><defs><linearGradient id="dsk" x1="0" y1="0" x2="0" y2="1"><stop offset="0" stop-color="#f3d6a0"/><stop offset=".35" stop-color="#f0dcc0"/><stop offset=".6" stop-color="#b89a98"/></linearGradient></defs><rect width="54" height="69" fill="url(#dsk)"/><path d="M0.0 3.9 L7.4 13.1 L15.7 22.4 L3.7 30.7 L0.0 30.7z" fill="#a88a8e" /><path d="M35.2 22.4 L46.3 19.6 L53.7 22.4 L53.7 43.7 L40.7 31.7z" fill="#a48a8c" /><path d="M0.0 31.7 L16.7 24.3 L35.2 27.0 L48.1 36.3 L53.7 49.3 L53.7 68.7 L0.0 68.7z" fill="#e3cf9c" /><path d="M0.0 51.1 L25.0 52.0 L25.9 68.7 L0.0 68.7z" fill="#efe3bd" /><path d="M0.0 31.7 L7.4 28.9 L13.0 51.1 L0.0 51.1z" fill="#cdb784" /><path d="M16.7 3.9 L20.4 0.2 L32.4 0.2 L36.1 7.6 L35.2 26.1 L32.4 22.4 L19.4 21.5 L15.3 24.3z" fill="#5b3a22" /><path d="M21.8 10.4 L32.4 10.4 L33.8 19.6 L30.6 27.0 L25.0 27.0 L21.8 19.6z" fill="#c9996e" /><path d="M23.1 19.6 L33.3 19.6 L31.0 27.5 L25.0 27.5z" fill="#7a4a2a" /><path d="M10.2 38.1 L19.4 28.4 L31.5 28.0 L38.0 40.0 L29.6 43.7 L19.4 42.3z" fill="#2f9c82" /><path d="M27.8 28.4 L31.5 28.0 L38.0 40.0 L30.6 41.9z" fill="#56b5a4" /><path d="M14.8 43.7 L33.3 37.2 L29.6 52.5 L20.4 49.7z" fill="#b9abcd" /><path d="M29.6 43.7 L40.7 41.9 L48.1 47.4 L44.4 55.3 L30.6 51.6z" fill="#2a2238" /><path d="M37.0 48.3 L48.1 46.5 L50.5 55.7 L40.7 57.1z" fill="#c98e66" /><path d="M25.9 59.0 L44.4 55.7 L53.7 62.2 L53.2 68.7 L25.9 68.7z" fill="#7c3c9c" /><path d="M42.6 56.7 L52.8 55.7 L53.7 65.9 L46.3 64.1z" fill="#2c2244" /><path d="M31.5 62.2 L40.7 60.4 L48.1 65.9 L37.0 66.9z" fill="#c98e66" /></svg>
<svg style="left:615px;top:909px" width="54" height="69" viewBox="0 0 54 69"><defs><linearGradient id="dsk2" x1="0" y1="0" x2="0" y2="1"><stop offset="0" stop-color="#f3d6a0"/><stop offset=".35" stop-color="#f0dcc0"/><stop offset=".6" stop-color="#b89a98"/></linearGradient></defs><rect width="54" height="69" fill="url(#dsk2)"/><path d="M0.0 3.9 L7.4 13.1 L15.7 22.4 L3.7 30.7 L0.0 30.7z" fill="#a88a8e" /><path d="M35.2 22.4 L46.3 19.6 L53.7 22.4 L53.7 43.7 L40.7 31.7z" fill="#a48a8c" /><path d="M0.0 31.7 L16.7 24.3 L35.2 27.0 L48.1 36.3 L53.7 49.3 L53.7 68.7 L0.0 68.7z" fill="#e3cf9c" /><path d="M0.0 51.1 L25.0 52.0 L25.9 68.7 L0.0 68.7z" fill="#efe3bd" /><path d="M0.0 31.7 L7.4 28.9 L13.0 51.1 L0.0 51.1z" fill="#cdb784" /><path d="M16.7 3.9 L20.4 0.2 L32.4 0.2 L36.1 7.6 L35.2 26.1 L32.4 22.4 L19.4 21.5 L15.3 24.3z" fill="#5b3a22" /><path d="M21.8 10.4 L32.4 10.4 L33.8 19.6 L30.6 27.0 L25.0 27.0 L21.8 19.6z" fill="#c9996e" /><path d="M23.1 19.6 L33.3 19.6 L31.0 27.5 L25.0 27.5z" fill="#7a4a2a" /><path d="M10.2 38.1 L19.4 28.4 L31.5 28.0 L38.0 40.0 L29.6 43.7 L19.4 42.3z" fill="#2f9c82" /><path d="M27.8 28.4 L31.5 28.0 L38.0 40.0 L30.6 41.9z" fill="#56b5a4" /><path d="M14.8 43.7 L33.3 37.2 L29.6 52.5 L20.4 49.7z" fill="#b9abcd" /><path d="M29.6 43.7 L40.7 41.9 L48.1 47.4 L44.4 55.3 L30.6 51.6z" fill="#2a2238" /><path d="M37.0 48.3 L48.1 46.5 L50.5 55.7 L40.7 57.1z" fill="#c98e66" /><path d="M25.9 59.0 L44.4 55.7 L53.7 62.2 L53.2 68.7 L25.9 68.7z" fill="#7c3c9c" /><path d="M42.6 56.7 L52.8 55.7 L53.7 65.9 L46.3 64.1z" fill="#2c2244" /><path d="M31.5 62.2 L40.7 60.4 L48.1 65.9 L37.0 66.9z" fill="#c98e66" /></svg>
<div class="a lnk" style="left:592px;top:716px;width:100px;text-align:center;font-size:13.2px">Ника</div>
<div class="a lnk" style="left:592px;top:731px;width:100px;text-align:center;font-size:11px">Фалалеева</div>
<div class="a lnk" style="left:671px;top:698px;width:100px;text-align:center;font-size:13.2px">Vincent</div>
<div class="a lnk" style="left:671px;top:713px;width:100px;text-align:center;font-size:11px">Fox</div>
<div class="a lnk" style="left:750px;top:714px;width:100px;text-align:center;font-size:13.2px">Donald</div>
<div class="a lnk" style="left:750px;top:729px;width:100px;text-align:center;font-size:11px">Trump</div>
<div class="a lnk" style="left:592px;top:826px;width:100px;text-align:center;font-size:13.2px">Денис</div>
<div class="a lnk" style="left:592px;top:980px;width:100px;text-align:center;font-size:13.2px">Денис</div>
</div>

 <div class="hdr" style="left:602px;top:847px;width:240px;height:28px"></div>
 <div class="a" style="left:612px;top:853px;font-weight:700;color:#45688e">Друзья онлайн</div>
 <div class="sub" style="left:602px;top:875px;width:240px;height:25px"></div>
 <div class="a gr" style="left:612px;top:879px">1 друг онлайн</div>

 <!-- right info column -->
 <div class="a" style="left:868px;top:96px;font-weight:700;font-size:14.4px;color:#45688e;line-height:18px">Femboy Nyashka</div>
 <div class="a" style="left:870px;top:117px">хейтеры сосут хуи</div>
 <div style="position:absolute;left:868px;top:137px;width:466px;height:1px;background:#dde2e8"></div>
 <div class="a gr" style="left:868px;top:145px">Местоимения:</div><div class="a" style="left:1012px;top:145px">они/их</div>
 <div class="a gr" style="left:868px;top:163px">Семейное положение:</div><div class="a" style="left:1012px;top:163px">В активном поиске</div>
 <div class="a gr" style="left:868px;top:181px">Дата регистрации:</div><div class="a" style="left:1012px;top:181px">31 окт. в 18:16</div>
 <div class="a gr" style="left:868px;top:199px">Полит. взгляды:</div><div class="a" style="left:1012px;top:199px">Либеральные</div>
 <div class="a gr" style="left:868px;top:217px">День рождения:</div><div class="a" style="left:1012px;top:217px">27 января</div>
 <div class="a lnk" style="left:1011px;top:261px">Показать информацию</div>
 <div class="hdr" style="left:859px;top:294px;width:475px;height:28px"></div>
 <div class="a" style="left:868px;top:299px;font-weight:700;color:#45688e">Фотографии</div>
 <div class="sub" style="left:859px;top:322px;width:475px;height:25px"></div>

 <!-- audio widget -->
 <div style="position:absolute;left:1368px;top:59px;width:187px;height:47px;border-radius:3px;background:#e4e9ee"></div>
 <svg style="left:1383px;top:73px" width="10" height="17" viewBox="0 0 10 17"><path d="M0.5 1v15L9.5 8.5z" fill="#9aabc1"/></svg>
 <div class="a" style="left:1405px;top:65px;font-weight:700;color:#93a6be">Lil Durk/Chief Keef</div>
 <div class="a" style="left:1405px;top:81px;color:#a3b3c7">Decline</div>

 <!-- wall post peek -->
 <div style="position:absolute;left:842px;top:961px;width:1px;height:40px;background:#e3e7ec"></div>
 <div style="position:absolute;left:1325px;top:961px;width:1px;height:40px;background:#e3e7ec"></div>
 <div id="postava" style="position:absolute;left:873px;top:964px;width:58px;height:34px;background:#b9a39c;overflow:hidden"><svg style="left:0;top:0" width="58" height="58" viewBox="0 0 240 240"><use href="#avg"/></svg></div>
 <div class="a" style="left:943px;top:968px"><b style="color:#2b587a">Femboy Nyashka</b> опубликовали</div>
 <div class="a" style="left:943px;top:985px;font-size:10.8px">34 минут назад</div>
</div>

<!-- FIREFOX TOOLBAR -->
<div id="ff">
 <div id="url"></div>
 <!-- nav -->
 <svg style="left:16px;top:13px" width="16" height="14" viewBox="0 0 16 14"><path d="M7 1L1.3 7 7 13M1.6 7H15" fill="none" stroke="#dadade" stroke-width="1.5" stroke-linecap="round" stroke-linejoin="round"/></svg>
 <svg style="left:52px;top:13px" width="16" height="14" viewBox="0 0 16 14"><path d="M9 1l5.7 6L9 13M14.4 7H1" fill="none" stroke="#5d5d63" stroke-width="1.5" stroke-linecap="round" stroke-linejoin="round"/></svg>
 <svg style="left:88px;top:12px" width="16" height="16" viewBox="0 0 16 16"><path d="M13.8 8.6A5.9 5.9 0 1 1 11.4 3.2" fill="none" stroke="#dadade" stroke-width="1.5" stroke-linecap="round"/><path d="M14.2 1v5h-5z" fill="#dadade"/></svg>
 <!-- url icons -->
 <svg style="left:201px;top:11px" width="16" height="18" viewBox="0 0 16 18"><defs><linearGradient id="sh" x1="0" y1="1" x2="1" y2="0"><stop offset="0" stop-color="#2eb5e8"/><stop offset="1" stop-color="#8a6fe0"/></linearGradient></defs><path d="M8 1.2c2 1.4 4.2 2 6.4 2.2 0 6-1.8 10.6-6.4 13C3.400 14 1.600 9.400 1.600 3.400 3.800 3.200 6 2.600 8 1.200z" fill="none" stroke="url(#sh)" stroke-width="1.5" stroke-linejoin="round"/></svg>
 <svg style="left:231px;top:12px" width="12" height="16" viewBox="0 0 12 16"><rect x="0.8" y="7" width="10.4" height="8.200" rx="1.500" fill="none" stroke="#bdbdc1" stroke-width="1.500"/><path d="M3 7V4.500a3 3 0 0 1 6 0V7" fill="none" stroke="#bdbdc1" stroke-width="1.500"/></svg>
 <svg style="left:257px;top:14px" width="16" height="12" viewBox="0 0 16 12"><path d="M0.5 3h8M7.500 9.200h8" stroke="#bdbdc1" stroke-width="1.400" stroke-linecap="round"/><circle cx="12" cy="3" r="2" fill="none" stroke="#bdbdc1" stroke-width="1.400"/><circle cx="3.500" cy="9.200" r="2" fill="none" stroke="#bdbdc1" stroke-width="1.400"/></svg>
 <div class="a" style="left:283px;top:11px;font-size:15px;line-height:18px;color:#dcdce0">ovk.to<span style="color:#8c8c92">/id34378</span></div>
 <!-- reader / translate / zoom / star -->
 <svg style="left:603px;top:13px" width="13" height="15" viewBox="0 0 13 15"><rect x="0.800" y="0.800" width="11.400" height="13.400" rx="1.800" fill="none" stroke="#cfcfd3" stroke-width="1.400"/><path d="M3.500 4.500h6M3.500 7.500h6M3.500 10.500h3.500" stroke="#cfcfd3" stroke-width="1.200"/></svg>
 <svg style="left:630px;top:12px" width="17" height="16" viewBox="0 0 17 16"><path d="M0.800 2.600h8.400M4.800 0.800v1.800M7.600 2.800c-.6 3-3 5.600-6.400 7M2.600 5c1 2 2.800 3.800 5 5" fill="none" stroke="#dadade" stroke-width="1.300" stroke-linecap="round"/><path d="M8.600 15l3.400-8.400L15.400 15M9.800 12.400h4.400" fill="none" stroke="#dadade" stroke-width="1.400" stroke-linecap="round" stroke-linejoin="round"/></svg>
 <div style="position:absolute;left:658px;top:10px;width:43px;height:21px;border-radius:3px;background:#39383e"></div>
 <div class="a" style="left:658px;top:12px;width:43px;text-align:center;font-size:11.400px;line-height:17px;color:#bcbcc2">120%</div>
 <svg style="left:713px;top:12px" width="17" height="16" viewBox="0 0 17 16"><path d="M8.500 1.200l2.200 4.700 5.100.6-3.800 3.500 1 5-4.500-2.500L4 15l1-5L1.200 6.500l5.100-.6z" fill="none" stroke="#dadade" stroke-width="1.400" stroke-linejoin="round"/></svg>
 <!-- bookmarks -->
 <svg style="left:748px;top:12px" width="16" height="16" viewBox="0 0 16 16"><circle cx="8" cy="8" r="7.600" fill="#de5833"/><circle cx="8" cy="8" r="6" fill="#f2d8cf"/><ellipse cx="8.600" cy="8.600" rx="3" ry="4.400" fill="#fff"/><path d="M6 11.500c1 .8 2.600.8 3.600 0" stroke="#6bb44a" stroke-width="1.600" fill="none"/></svg>
 <div class="bm" style="left:768px;letter-spacing:-.1px">duck.ai</div>
 <svg style="left:823px;top:13px" width="17" height="14" viewBox="0 0 17 14"><path d="M0 13V0.600l8.500 7 8.500-7V13z" fill="#8b6be8"/><path d="M0 0.600l8.500 7L12 4.600 13.400 13H0z" fill="#6d4aff" opacity=".55"/><path d="M12.200 4.400L17 0.600V13h-4.800z" fill="#c9b8ff"/></svg>
 <div class="bm" style="left:845px;letter-spacing:.08px">Proton Mail</div>
 <svg style="left:929px;top:14px" width="16" height="12" viewBox="0 0 16 12"><rect width="16" height="12" rx="3" fill="#d3173d"/><path d="M6.200 3.200v5.600L11 6z" fill="#fff"/></svg>
 <div class="bm" style="left:949px;letter-spacing:-.32px">YouTube</div>
 <svg style="left:1015px;top:12px" width="16" height="16" viewBox="0 0 16 16"><rect width="16" height="16" rx="3.500" fill="#1f6fd6"/><path d="M3 4.200h10a.8.8 0 0 1 .8.800v5a.8.8 0 0 1-.8.800H7.500L5 13v-2.200H3a.8.8 0 0 1-.8-.8V5a.8.8 0 0 1 .8-.800z" fill="#b9d4f5"/></svg>
 <div class="bm" style="left:1035px;letter-spacing:-1.500px">VK</div>
 <svg style="left:1063px;top:12px" width="16" height="16" viewBox="0 0 16 16"><circle cx="8" cy="8" r="6.800" fill="none" stroke="#1bd96a" stroke-width="1.800"/><path d="M4.500 9.500c1.500-3.500 4.500-5 7-3.500M7 12c0-2.500 1.500-4.500 4-5" fill="none" stroke="#1bd96a" stroke-width="1.600"/></svg>
 <div class="bm" style="left:1083px;letter-spacing:.44px">Modrinth</div>
 <svg style="left:1153px;top:12px" width="16" height="16" viewBox="0 0 16 16"><circle cx="8" cy="8" r="8" fill="#5865f2"/><path d="M4 10.800c.300-2.600.800-4.400 1.600-5.600 1-.5 1.500-.6 2.400-.6s1.400.100 2.400.6c.800 1.200 1.300 3 1.600 5.600-1 .6-1.800.800-2.400.8l-.5-.9H6.900l-.5.9c-.6 0-1.400-.2-2.400-.8z" fill="#fff"/><circle cx="6.500" cy="8.600" r=".9" fill="#5865f2"/><circle cx="9.500" cy="8.600" r=".9" fill="#5865f2"/></svg>
 <div class="bm" style="left:1174px;letter-spacing:-.06px">Discord</div>
 <svg style="left:1233px;top:11px" width="17" height="18" viewBox="0 0 17 18"><circle cx="8.500" cy="9.500" r="5" fill="none" stroke="#c9c9cd" stroke-width="1.600"/><path d="M1.500 16.500L15.500 1.500" stroke="#c9c9cd" stroke-width="1.500" stroke-linecap="round"/></svg>
 <div class="bm" style="left:1253px;letter-spacing:-.14px">Grok</div>
 <svg style="left:1295px;top:12px" width="16" height="16" viewBox="0 0 16 16"><rect width="16" height="16" fill="#48484c"/><rect x="4.800" y="3.600" width="6.400" height="8.800" rx="2.600" fill="none" stroke="#e8e8ea" stroke-width="2.200"/></svg>
 <div class="bm" style="left:1315px;letter-spacing:-.48px">OpenVK</div>
 <svg style="left:1377px;top:11px" width="17" height="17" viewBox="0 0 17 17"><rect x="6" y="4.500" width="11" height="12" rx="1.500" fill="#d5d7db"/><rect width="11" height="12.500" rx="1.500" fill="#4a86e8"/><path d="M7.600 6.200H5.400v1h1.100c-.2.700-.7 1.100-1.400 1.100a1.700 1.700 0 1 1 1.100-3" fill="none" stroke="#fff" stroke-width=".9"/><path d="M11 8.500h4M13 7.600v.9M12 8.700c.400 1.600 1.400 2.800 3 3.600M14.600 8.700c-.5 1.700-1.600 3-3.200 3.700" fill="none" stroke="#8a8d94" stroke-width=".8"/></svg>
 <div class="bm" style="left:1398px">Google Переводчик</div>
 <!-- right icons -->
 <svg style="left:1542px;top:12px" width="14" height="15" viewBox="0 0 16 17"><path d="M8 1v10M3.600 7L8 11.400 12.400 7M1 12.500v2.300a1.200 1.200 0 0 0 1.200 1.200h11.600a1.200 1.200 0 0 0 1.200-1.200v-2.300" fill="none" stroke="#dadade" stroke-width="1.500" stroke-linecap="round" stroke-linejoin="round"/></svg>
 <svg style="left:1580px;top:12px" width="14" height="15" viewBox="0 0 16 17"><path d="M5.200 4.400V3a1.900 1.900 0 0 1 3.800 0v1.400h3.600v4H14a1.900 1.900 0 0 1 0 3.800h-1.400V16H1.400v-4.200h1.200a1.600 1.600 0 0 0 0-3.200H1.400V4.400z" fill="none" stroke="#dadade" stroke-width="1.400" stroke-linejoin="round"/></svg>
 <svg style="left:1616px;top:13px" width="16" height="16" viewBox="0 0 16 16"><path d="M8 0.400c2.200 1.200 4.600 1.600 7 1.800 0 6.400-2 10.800-7 13.400C3 13 1 8.600 1 2.200c2.400-.2 4.800-.6 7-1.800z" fill="#7d0d12"/><path d="M4.600 6.400v2.400c0 .9.600 1.400 1.300 1.400s1.300-.5 1.300-1.400V6.400M7.200 8.800c0 .9.600 1.400 1.300 1.400h.4c1 0 1.800-.8 1.800-1.800s-.8-1.800-1.800-1.800" fill="none" stroke="#e9b9bb" stroke-width="1.100"/></svg>
 <div style="position:absolute;left:1622px;top:7px;width:14px;height:11px;border-radius:2px;background:#4c4c51"></div>
 <div class="a" style="left:1622px;top:5px;width:14px;text-align:center;font-size:11.500px;line-height:14px;color:#bdbdc2">3</div>
 <svg style="left:1655px;top:10px" width="18" height="18" viewBox="0 0 18 18"><defs><linearGradient id="dm" x1="0" y1="0" x2="0" y2="1"><stop offset="0" stop-color="#7b5cf0"/><stop offset=".6" stop-color="#c48ad8"/><stop offset="1" stop-color="#f0b48c"/></linearGradient></defs><rect x="3.400" y="3.400" width="11.200" height="11.200" rx="2.600" transform="rotate(45 9 9)" fill="url(#dm)"/></svg>
 <div style="position:absolute;left:1662px;top:7px;width:14px;height:11px;border-radius:2px;background:#d0d0d4"></div>
 <div class="a" style="left:1662px;top:5px;width:14px;text-align:center;font-size:11.500px;line-height:14px;color:#38383d">1</div>
 <svg style="left:1696px;top:12px" width="16" height="16" viewBox="0 0 16 16"><rect width="16" height="16" rx="2.400" fill="#6a6a6e"/><path d="M5.800 6.200a2.200 2.200 0 1 1 3.200 2c-.7.400-1 .8-1 1.600" fill="none" stroke="#a9a9ad" stroke-width="1.600"/><circle cx="8" cy="12.200" r="1" fill="#a9a9ad"/></svg>
 <svg style="left:1736px;top:12px" width="16" height="16" viewBox="0 0 16 16"><circle cx="8" cy="8" r="8" fill="#de5833"/><circle cx="8" cy="8" r="6.400" fill="none" stroke="#f6e2da" stroke-width="1"/><ellipse cx="8.600" cy="8.400" rx="2.800" ry="4.200" fill="#fff"/><path d="M6.400 11.600c.800.700 2.400.7 3.400 0" stroke="#6bb44a" stroke-width="1.500" fill="none"/><path d="M9.600 8.400h2.200" stroke="#f7b733" stroke-width="1.200"/></svg>
 <svg style="left:1775px;top:14px" width="13" height="12" viewBox="0 0 15 13"><path d="M0.600 1.200h13.800M0.600 6.500h13.800M0.600 11.800h13.800" stroke="#dadade" stroke-width="1.400" stroke-linecap="round"/></svg>
 <!-- window buttons -->
 <div style="position:absolute;left:1812px;top:8px;width:24px;height:24px;border-radius:12px;background:#2e2d33"></div>
 <div style="position:absolute;left:1848px;top:8px;width:24px;height:24px;border-radius:12px;background:#2e2d33"></div>
 <div style="position:absolute;left:1885px;top:8px;width:24px;height:24px;border-radius:12px;background:#2e2d33"></div>
 <div style="position:absolute;left:1820px;top:21px;width:8px;height:2px;background:#e0e0e4"></div>
 <svg style="left:1854px;top:14px" width="12" height="12" viewBox="0 0 12 12"><path d="M3.600 3V1h7.400v7.400H9" fill="none" stroke="#77777c" stroke-width="1.400"/><rect x="1.200" y="4.400" width="6" height="6" fill="none" stroke="#e0e0e4" stroke-width="1.800"/></svg>
 <svg style="left:1892px;top:15px" width="10" height="10" viewBox="0 0 10 10"><path d="M1 1l8 8M9 1L1 9" stroke="#e8e8ec" stroke-width="2"/></svg>
</div>
<div id="side">
 <div style="position:absolute;left:13px;top:7px;width:116px;height:32px;border-radius:6px;background:#48474e"></div>
 <svg style="left:21px;top:17px" width="17" height="11" viewBox="3.600 7.200 16.800 10.200"><path fill="#6f8fb8" d="M19.376 17.123h-1.744c-.66 0-.864-.525-2.050-1.727-1.033-1-1.490-1.135-1.744-1.135-.356 0-.458.102-.458.593v1.575c0 .424-.135.678-1.253.678-1.846 0-3.896-1.118-5.335-3.202C4.624 10.857 4.030 8.570 4.030 8.096c0-.254.102-.491.593-.491h1.744c.440 0 .610.203.780.677.863 2.490 2.303 4.675 2.896 4.675.220 0 .322-.102.322-.660V9.721c-.068-1.186-.695-1.287-.695-1.710 0-.204.170-.407.440-.407h2.744c.373 0 .508.203.508.643v3.473c0 .372.170.508.271.508.220 0 .407-.136.813-.542 1.254-1.406 2.151-3.574 2.151-3.574.119-.254.322-.491.763-.491h1.744c.525 0 .644.270.525.643-.220 1.017-2.354 4.031-2.354 4.031-.186.305-.254.440 0 .780.186.254.796.779 1.203 1.253.745.847 1.320 1.558 1.473 2.050.170.490-.085.744-.576.744z"/></svg>
 <div class="a" style="left:44px;top:14px;font-size:14px;line-height:18px;letter-spacing:-.3px;color:#ececf0">Femboy</div>
 <div style="position:absolute;left:94px;top:12px;width:6px;height:22px;background:linear-gradient(90deg,rgba(72,71,78,0),#48474e)"></div>
 <svg style="left:107px;top:18px" width="10" height="10" viewBox="0 0 10 10"><path d="M1 1l8 8M9 1L1 9" stroke="#ececf0" stroke-width="1.500"/></svg>
 <svg style="left:21px;top:54px" width="14" height="14" viewBox="0 0 14 14"><path d="M7 1v12M1 7h12" stroke="#ececf0" stroke-width="1.400" stroke-linecap="round"/></svg>
 <div class="a" style="left:44px;top:52px;font-size:14px;line-height:18px;letter-spacing:-.25px;color:#ececf0">New Tab</div>
 <svg style="left:21px;top:966px" width="16" height="17" viewBox="0 0 16 17"><path d="M9.66 15.71 L6.34 15.71 L5.72 13.62 L4.71 13.03 L2.59 13.55 L0.92 10.66 L2.43 9.09 L2.43 7.91 L0.92 6.34 L2.59 3.45 L4.71 3.97 L5.72 3.38 L6.34 1.29 L9.66 1.29 L10.28 3.38 L11.29 3.97 L13.41 3.45 L15.08 6.34 L13.57 7.91 L13.57 9.09 L15.08 10.66 L13.41 13.55 L11.29 13.03 L10.28 13.62z" fill="none" stroke="#ececf0" stroke-width="1.400" stroke-linejoin="round"/><circle cx="8" cy="8.500" r="2.300" fill="none" stroke="#ececf0" stroke-width="1.400"/></svg>
</div>

<!-- KONSOLE -->
<div id="kon">
 <div style="position:absolute;left:0;top:0;width:1064px;height:28px;border-radius:9px 9px 0 0;background:linear-gradient(90deg,#535358 0,#59595e 420px,#59595e 600px,#535358 965px,#48484d 967px,#48484d 100%)"></div>
 <svg style="left:10px;top:8px" width="16" height="16" viewBox="0 0 16 16"><rect x="1" y="1" width="14" height="14" rx="2" fill="none" stroke="#ececf0" stroke-width="1.6"/><path d="M4 5.5l3 2.3-3 2.3M8.3 10.6h3.2" fill="none" stroke="#ececf0" stroke-width="1.2"/></svg>
 <div style="position:absolute;left:43px;top:12px;width:6px;height:6px;border-radius:3px;background:#d8d8dc"></div>
 <div class="a" style="left:2px;top:6px;width:1034px;text-align:center;font-size:13.33px;line-height:16px;color:#cfcfd4">~ : bash — Konsole</div>
 <div style="position:absolute;left:982px;top:6px;width:16px;height:16px;border-radius:8px;background:#78787d"></div>
 <div style="position:absolute;left:1010px;top:6px;width:16px;height:16px;border-radius:8px;background:#78787d"></div>
 <div style="position:absolute;left:1038px;top:6px;width:16px;height:16px;border-radius:8px;background:#78787d"></div>
 <div id="ktb"></div>
 <div style="position:absolute;left:4px;top:73px;width:1056px;height:1px;background:#47474d"></div>
 <!-- new tab -->
 <svg style="left:22px;top:44px" width="16" height="14" viewBox="0 0 16 14"><path d="M3 0.8h10l1.2 10.4H16V13H0v-1.8h1.8z" fill="#ececf0"/><path d="M8 3.2v6M5 6.2h6" stroke="#2a2a30" stroke-width="1.7"/></svg>
 <div class="t" style="left:45px">New Tab</div>
 <svg style="left:91px;top:60px" width="8" height="5" viewBox="0 0 8 5"><path d="M1 0.8l3 3 3-3" fill="none" stroke="#d8d8dc" stroke-width="1.1"/></svg>
 <!-- split view -->
 <svg style="left:114px;top:44px" width="16" height="14" viewBox="0 0 16 14"><rect x="1" y="1" width="14" height="12" fill="none" stroke="#f0f0f4" stroke-width="2"/><path d="M8 1v12" stroke="#f0f0f4" stroke-width="2"/></svg>
 <div class="t" style="left:137px">Split View</div>
 <svg style="left:202px;top:49px" width="11" height="7" viewBox="0 0 11 7"><path d="M0.8 0.8l4.7 4.7 4.7-4.7" fill="none" stroke="#e0e0e4" stroke-width="1.2"/></svg>
 <!-- copy -->
 <svg style="left:807px;top:43px" width="14" height="16" viewBox="0 0 14 16"><path d="M1 12V1h9" fill="none" stroke="#595960" stroke-width="1.4"/><rect x="4" y="4" width="9" height="11" fill="none" stroke="#595960" stroke-width="1.6"/></svg>
 <div class="t" style="left:828px;color:#6b6b73">Copy</div>
 <!-- paste -->
 <svg style="left:881px;top:42px" width="13" height="16" viewBox="0 0 13 16"><rect x="1" y="3.2" width="11" height="11.8" fill="none" stroke="#f0f0f4" stroke-width="1.8"/><rect x="3.6" y="0.6" width="5.8" height="4" rx="1" fill="#f0f0f4"/></svg>
 <div class="t" style="left:902px">Paste</div>
 <!-- find -->
 <svg style="left:955px;top:44px" width="15" height="15" viewBox="0 0 15 15"><circle cx="5.8" cy="5.8" r="4.3" fill="none" stroke="#f0f0f4" stroke-width="2"/><path d="M9 9l5 5" stroke="#f0f0f4" stroke-width="2.2"/></svg>
 <div class="t" style="left:977px">Find...</div>
 <!-- hamburger -->
 <svg style="left:1030px;top:44px" width="14" height="15" viewBox="0 0 14 15"><path d="M0 1h14M0 5.3h14M0 9.6h14M0 13.9h14" stroke="#f4f4f8" stroke-width="2"/></svg>
 <!-- scrollbar -->
 <div style="position:absolute;left:1040px;top:74px;width:20px;height:557px;background:#000"></div>
 <div style="position:absolute;left:1039px;top:74px;width:1px;height:557px;background:#2b2b2b"></div>
 <div style="position:absolute;left:1046px;top:76px;width:8px;height:552px;border-radius:4px;background:#2e2e2f"></div>
<div id="term">
<div class="l" style="top:2px"><span class="g">user@fedora</span>:~$ fastfetch</div>
<div class="l" style="top:19px"><span class="b">             .',;::::;,'.</span></div>
<div class="l" style="top:36px"><span class="b">         .';:cccccccccccc:;,.</span></div>
<div class="l" style="top:53px"><span class="b">      .;cccccccccccccccccccccc;.</span></div>
<div class="l" style="top:70px"><span class="b">    .:cccccccccccccccccccccccccc:.</span></div>
<div class="l" style="top:87px"><span class="b">  .;ccccccccccccc;</span>.:dddl:.<span class="b">;ccccccc;.</span></div>
<div class="l" style="top:104px"><span class="b"> .:ccccccccccccc;</span>OWMKOOXMWd<span class="b">;ccccccc:.</span></div>
<div class="l" style="top:121px"><span class="b">.:ccccccccccccc;</span>KMMc<span class="b">;cc;</span>xMMc<span class="b">;ccccccc:.</span></div>
<div class="l" style="top:138px"><span class="b">,cccccccccccccc;</span>MMM.<span class="b">;cc;</span>;WW:<span class="b">;cccccccc,</span></div>
<div class="l" style="top:155px"><span class="b">:cccccccccccccc;</span>MMM.<span class="b">;cccccccccccccccc:</span></div>
<div class="l" style="top:172px"><span class="b">:ccccccc;</span>oxOOOo<span class="b">;</span>MMM000k.<span class="b">;cccccccccccc:</span></div>
<div class="l" style="top:189px"><span class="b">cccccc;</span>0MMKxdd:<span class="b">;</span>MMMkddc.<span class="b">;cccccccccccc;</span></div>
<div class="l" style="top:206px"><span class="b">ccccc;</span>XMO'<span class="b">;cccc;</span>MMM.<span class="b">;cccccccccccccccc'</span></div>
<div class="l" style="top:223px"><span class="b">ccccc;</span>MMo<span class="b">;ccccc;</span>MMW.<span class="b">;ccccccccccccccc;</span></div>
<div class="l" style="top:240px"><span class="b">ccccc;</span>0MNc.<span class="b">ccc</span>.xMMd<span class="b">;ccccccccccccccc;</span></div>
<div class="l" style="top:257px"><span class="b">cccccc;</span>dNMWXXXWM0:<span class="b">;cccccccccccccc:,</span></div>
<div class="l" style="top:274px"><span class="b">cccccccc;</span>.:odl:.<span class="b">;cccccccccccccc:,.</span></div>
<div class="l" style="top:291px"><span class="b">ccccccccccccccccccccccccccccc:'.</span></div>
<div class="l" style="top:308px"><span class="b">:ccccccccccccccccccccccc:;,..</span></div>
<div class="l" style="top:325px"><span class="b"> ':cccccccccccccccc::;,.</span></div>
<div class="l" style="top:19px;left:340px">user@fedora</div>
<div style="position:absolute;left:340.300px;top:42.500px;width:87.300px;height:2.600px;background:repeating-linear-gradient(90deg,#fff 0,#fff 6.600px,transparent 6.600px,transparent 8px)"></div>
<div class="l" style="top:53px;left:340px"><span class="b">OS</span>: Fedora Linux 43 (KDE Plasma Desktop Edition) x86_64</div>
<div class="l" style="top:70px;left:340px"><span class="b">Host</span>: A520M K V2 (-CF)</div>
<div class="l" style="top:87px;left:340px"><span class="b">Kernel</span>: Linux 6.17.5-300.fc43.x86_64</div>
<div class="l" style="top:104px;left:340px"><span class="b">Uptime</span>: 1 hour, 8 mins</div>
<div class="l" style="top:121px;left:340px"><span class="b">Packages</span>: 3008 (rpm), 45 (flatpak)</div>
<div class="l" style="top:138px;left:340px"><span class="b">Shell</span>: bash 5.3.0</div>
<div class="l" style="top:155px;left:340px"><span class="b">Display (S22C31x)</span>: 1920x1080 @ 75 Hz in 21" [External]</div>
<div class="l" style="top:172px;left:340px"><span class="b">DE</span>: KDE Plasma 6.4.5</div>
<div class="l" style="top:189px;left:340px"><span class="b">WM</span>: KWin (Wayland)</div>
<div class="l" style="top:206px;left:340px"><span class="b">WM Theme</span>: Layan</div>
<div class="l" style="top:223px;left:340px"><span class="b">Theme</span>: Breeze (Layan) [Qt], Breeze-Dark [GTK2], Breeze [GTK3]</div>
<div class="l" style="top:240px;left:340px"><span class="b">Icons</span>: Tela [Qt], Tela [GTK2/3/4]</div>
<div class="l" style="top:257px;left:340px"><span class="b">Font</span>: Noto Sans (10pt) [Qt], Noto Sans (10pt) [GTK2/3/4]</div>
<div class="l" style="top:274px;left:340px"><span class="b">Cursor</span>: Layan-white (24px)</div>
<div class="l" style="top:291px;left:340px"><span class="b">Terminal</span>: konsole 25.8.2</div>
<div class="l" style="top:308px;left:340px"><span class="b">Terminal Font</span>: Source Code Pro Black (10pt, Italic)</div>
<div class="l" style="top:325px;left:340px"><span class="b">CPU</span>: AMD Ryzen 3 PRO 3200G (4) @ 3.60 GHz</div>
<div class="l" style="top:342px;left:340px"><span class="b">GPU</span>: AMD Radeon Vega 8 Graphics [Integrated]</div>
<div class="l" style="top:359px;left:340px"><span class="b">Memory</span>: 5.18 GiB / 13.56 GiB (<span class="g">38%</span>)</div>
<div class="l" style="top:376px;left:340px"><span class="b">Swap</span>: 0 B / 8.00 GiB (<span class="g">0%</span>)</div>
<div class="l" style="top:393px;left:340px"><span class="b">Disk (/)</span>: 75.98 GiB / 444.54 GiB (<span class="g">17%</span>) - btrfs</div>
<div class="l" style="top:410px;left:340px"><span class="b">Disk (/run/media/user/hdd)</span>: 850.29 GiB / 931.39 GiB (<span class="r">91%</span>) - fuseblk</div>
<div class="l" style="top:427px;left:340px"><span class="b">Local IP (enp3s0)</span>: 192.168.0.8/24</div>
<div class="l" style="top:444px;left:340px"><span class="b">Locale</span>: en_US.UTF-8</div>
<div style="position:absolute;left:340px;top:477px;width:24px;height:17px;background:#000000"></div>
<div style="position:absolute;left:364px;top:477px;width:24px;height:17px;background:#b21818"></div>
<div style="position:absolute;left:388px;top:477px;width:24px;height:17px;background:#18b218"></div>
<div style="position:absolute;left:412px;top:477px;width:24px;height:17px;background:#b26818"></div>
<div style="position:absolute;left:436px;top:477px;width:24px;height:17px;background:#1818b2"></div>
<div style="position:absolute;left:460px;top:477px;width:24px;height:17px;background:#b218b2"></div>
<div style="position:absolute;left:484px;top:477px;width:24px;height:17px;background:#18b2b2"></div>
<div style="position:absolute;left:508px;top:477px;width:24px;height:17px;background:#b2b2b2"></div>
<div style="position:absolute;left:340px;top:494px;width:24px;height:17px;background:#686868"></div>
<div style="position:absolute;left:364px;top:494px;width:24px;height:17px;background:#ff5454"></div>
<div style="position:absolute;left:388px;top:494px;width:24px;height:17px;background:#54ff54"></div>
<div style="position:absolute;left:412px;top:494px;width:24px;height:17px;background:#ffff54"></div>
<div style="position:absolute;left:436px;top:494px;width:24px;height:17px;background:#5454ff"></div>
<div style="position:absolute;left:460px;top:494px;width:24px;height:17px;background:#ff54ff"></div>
<div style="position:absolute;left:484px;top:494px;width:24px;height:17px;background:#54ffff"></div>
<div style="position:absolute;left:508px;top:494px;width:24px;height:17px;background:#ffffff"></div>
<div class="l" style="top:512px"><span class="g">user@fedora</span>:~$</div>
<div style="position:absolute;left:124px;top:512px;width:8px;height:16px;background:#fff"></div>
</div></div>

<!-- TASKBAR -->
<div id="tb">
 <!-- launcher -->
 <svg style="left:24px;top:12px" width="18" height="18" viewBox="0 0 18 18"><circle cx="9" cy="9" r="7.400" fill="none" stroke="#e8ecf2" stroke-width="1.300" opacity=".85"/><circle cx="9" cy="9" r="4.200" fill="#e8ecf2"/></svg>
 <!-- folder -->
 <svg style="left:678px;top:7px" width="31" height="26" viewBox="0 0 31 26"><path d="M3 1.500h9.500l2.500 3H28a2.500 2.500 0 0 1 2.500 2.500v16A2.500 2.500 0 0 1 28 25.500H3A2.500 2.500 0 0 1 .5 23V4A2.500 2.500 0 0 1 3 1.500z" fill="#3f7fd6"/><rect x="4" y="3.600" width="22" height="4" rx="1" fill="#f4f7fb"/><path d="M.5 9.500A2.500 2.500 0 0 1 3 7h10l2.500-2.500H28a2.500 2.500 0 0 1 2.500 2.500v16a2.500 2.500 0 0 1-2.500 2.500H3A2.500 2.500 0 0 1 .5 23z" fill="#5294e2"/><path d="M12 19.500v-4l3.500-3 3.500 3v4h-2.400v-2.600h-2.200v2.600z" fill="none" stroke="#3d7bd0" stroke-width="1.100"/></svg>
 <!-- store -->
 <svg style="left:740px;top:7px" width="28" height="30" viewBox="0 0 28 30"><rect x="0" y="0" width="24" height="26" rx="2.500" fill="#4285f4"/><path d="M0 14L24 26H2.500A2.500 2.500 0 0 1 0 23.500z" fill="#3b78e0"/><path d="M7 3.500a5 5 0 0 0 10 0" fill="none" stroke="#fff" stroke-width="1.700" stroke-linecap="round"/><circle cx="18.500" cy="20.500" r="8" fill="#97b4f2"/><path d="M19.400 17.400l3 3-3 3" fill="none" stroke="#fff" stroke-width="1.500"/><circle cx="15" cy="18.200" r="1" fill="#fff"/><circle cx="14.400" cy="22" r="1" fill="#fff"/><circle cx="17" cy="24.600" r="1" fill="#fff"/></svg>
 <!-- spotify -->
 <svg style="left:798px;top:6px" width="28" height="28" viewBox="0 0 28 28"><circle cx="14" cy="14" r="13.500" fill="#1ed760"/><path d="M6.500 10.200c5-1.500 10.500-1.100 15 1.400" fill="none" stroke="#111" stroke-width="2.500" stroke-linecap="round"/><path d="M7.500 14.600c4.200-1.200 8.600-.8 12.400 1.300" fill="none" stroke="#111" stroke-width="2.100" stroke-linecap="round"/><path d="M8.500 18.600c3.400-.9 6.800-.6 9.800 1.100" fill="none" stroke="#111" stroke-width="1.700" stroke-linecap="round"/></svg>
 <div style="position:absolute;left:788px;top:34px;width:47px;height:3px;border-radius:1.500px;background:#4a5878"></div>
 <!-- discord -->
 <svg style="left:858px;top:7px" width="26" height="26" viewBox="0 0 26 26"><rect width="26" height="26" rx="5" fill="#5865f2"/><path d="M5.200 17.600c.400-4 1.300-6.700 2.500-8.600 1.500-.7 2.400-1 3.300-1.100l.5 1c1-.15 2-.15 3 0l.5-1c.9.100 1.800.400 3.300 1.100 1.200 1.900 2.100 4.600 2.500 8.600-1.500 1-2.800 1.400-3.900 1.500l-.8-1.400c.5-.2 1-.4 1.400-.7-2.800 1.200-6.200 1.200-9 0 .4.300.9.500 1.400.7l-.8 1.400c-1.100-.1-2.400-.5-3.900-1.500z" fill="#fff"/><ellipse cx="10.200" cy="14.200" rx="1.600" ry="1.800" fill="#5865f2"/><ellipse cx="15.800" cy="14.200" rx="1.600" ry="1.800" fill="#5865f2"/></svg>
 <!-- librewolf -->
 <svg style="left:916px;top:6px" width="28" height="28" viewBox="0 0 28 28"><circle cx="14" cy="14" r="13.500" fill="#2aa6e2"/><circle cx="14" cy="14" r="9.500" fill="none" stroke="#fff" stroke-width="1.800"/><path d="M9.500 22l1.500-6 3-4.500 1.500-4 1 2.500 2.500.5-1.500 2.500 2 1-3 2 1.500 5.500c-2.800 1.600-6.500 1.600-10 -.5z" fill="#e8f4fb"/></svg>
 <div style="position:absolute;left:906px;top:34px;width:48px;height:3px;border-radius:1.500px;background:#7f889c"></div>
 <!-- green S -->
 <svg style="left:976px;top:6px" width="28" height="28" viewBox="0 0 28 28"><circle cx="14" cy="14" r="13.500" fill="#373737"/><path d="M19.500 10.500V8.600A2.100 2.100 0 0 0 17.400 6.500h-6.800A2.100 2.100 0 0 0 8.500 8.600v2.300c0 1.200.9 2.100 2.100 2.100h6.800c1.200 0 2.100.9 2.100 2.100v4.300a2.100 2.100 0 0 1-2.100 2.100h-6.800a2.100 2.100 0 0 1-2.100-2.100v-1.900" fill="none" stroke="#19e87c" stroke-width="2" stroke-linecap="round" transform="rotate(-14 14 14)"/></svg>
 <!-- signal -->
 <svg style="left:1035px;top:6px" width="28" height="28" viewBox="0 0 28 28"><circle cx="14" cy="14" r="13.500" fill="#1b97ef"/><circle cx="14.400" cy="13.400" r="8.300" fill="none" stroke="#dff0fd" stroke-width="1" stroke-dasharray="2.200 1.300"/><circle cx="14.400" cy="13.400" r="6.600" fill="#fff"/><path d="M8.600 17.500l-1.200 4 4.200-1.300z" fill="#fff"/></svg>
 <!-- diamond app -->
 <div style="position:absolute;left:1084px;top:34px;width:47px;height:3px;border-radius:1.500px;background:#544e6c"></div>
 <svg style="left:1092px;top:4px" width="32" height="33" viewBox="0 0 32 33"><defs><linearGradient id="dg" x1="0" y1="0" x2=".6" y2="1"><stop offset="0" stop-color="#6d4cf5"/><stop offset=".55" stop-color="#a77be8"/><stop offset="1" stop-color="#f5b58f"/></linearGradient></defs><rect width="32" height="32.500" rx="8" fill="#fff"/><rect x="9" y="9.500" width="14" height="14" rx="2.500" transform="rotate(45 16 16.500)" fill="url(#dg)"/><path d="M7.500 18l8.500 8 8.500-8-8.500 6z" fill="#e9c2c9" opacity=".7"/></svg>
 <!-- mustache -->
 <svg style="left:1152px;top:7px" width="30" height="30" viewBox="0 0 30 30"><defs><linearGradient id="mg" x1="0" y1="0" x2="0" y2="1"><stop offset="0" stop-color="#8457b8"/><stop offset=".55" stop-color="#5a4590"/><stop offset="1" stop-color="#27305a"/></linearGradient></defs><circle cx="15" cy="15" r="14.800" fill="url(#mg)"/><path d="M15 13.500c1-2.400 3-2.700 4.400-1.300 1.500 1.500 3.300 2.300 5.600 1.500-1 3-4.600 4.400-7.600 3.300-1-.4-1.800-1-2.400-1.800-.6.800-1.400 1.400-2.400 1.800-3 1.100-6.600-.3-7.600-3.300 2.300.8 4.100 0 5.600-1.500 1.400-1.400 3.400-1.100 4.400 1.300z" fill="#e9d8f4"/></svg>
 <!-- konsole active -->
 <div style="position:absolute;left:1199px;top:2px;width:55px;height:38px;border-radius:5px;background:rgba(255,255,255,.09)"></div>
 <svg style="left:1213px;top:8px" width="28" height="23" viewBox="0 0 28 23"><rect width="28" height="23" rx="2.500" fill="#5e6167"/><path d="M14 23L28 9v11.500a2.500 2.500 0 0 1-2.500 2.500z" fill="#696c72"/><path d="M5.500 5.200l5 3-5 3M11 13.800h6" fill="none" stroke="#fff" stroke-width="1.400"/></svg>
 <div style="position:absolute;left:1203px;top:34px;width:47px;height:3px;border-radius:1.500px;background:#4f46ff"></div>
 <!-- tray -->
 <svg style="left:1627px;top:12px" width="22" height="17" viewBox="0 0 22 17"><path d="M1 13.600c.400-4.400 1.400-7.400 2.800-9.600C5.400 3.200 6.400 2.900 7.400 2.800l.6 1.100c2-.2 4-.2 6 0l.6-1.100c1 .100 2 .400 3.600 1.200 1.400 2.200 2.400 5.200 2.800 9.600-1.700 1.100-3.100 1.600-4.400 1.700l-.9-1.500c-2.800 1-6.600 1-9.400 0l-.9 1.500c-1.300-.1-2.700-.6-4.400-1.700z" fill="#f2f2f5"/><ellipse cx="7.800" cy="10" rx="1.700" ry="1.900" fill="#2d2440"/><ellipse cx="14.200" cy="10" rx="1.700" ry="1.900" fill="#2d2440"/><circle cx="17.500" cy="3.200" r="3" fill="#ed3b44"/></svg>
 <svg style="left:1658px;top:12px" width="18" height="18" viewBox="0 0 18 18"><circle cx="9" cy="9" r="8.400" fill="#eef0f4"/><path d="M9 9.300c.6-1.300 1.700-1.500 2.500-.7.900.9 1.900 1.300 3.200.9-.6 1.700-2.700 2.500-4.400 1.900-.6-.2-1-.6-1.300-1-.3.400-.7.800-1.300 1-1.700.6-3.800-.2-4.400-1.900 1.300.4 2.300 0 3.200-.9.800-.8 1.900-.6 2.500.7z" fill="#2b2540"/></svg>
 <svg style="left:1685px;top:9px" width="24" height="24" viewBox="0 0 24 24"><defs><linearGradient id="dt" x1="0" y1="0" x2=".6" y2="1"><stop offset="0" stop-color="#7a56f2"/><stop offset=".55" stop-color="#b98be6"/><stop offset="1" stop-color="#f7bb94"/></linearGradient></defs><rect x="4.800" y="4.300" width="14.400" height="14.400" rx="2.600" transform="rotate(45 12 11.500)" fill="url(#dt)"/><path d="M2.500 13.500l9.500 8.300 9.500-8.300-9.500 5.800z" fill="#f0c9c4" opacity=".75"/></svg>
 <svg style="left:1716px;top:10px" width="22" height="22" viewBox="0 0 22 22"><circle cx="11" cy="11" r="11" fill="#2c3bf5"/><circle cx="11" cy="10.600" r="7.400" fill="none" stroke="#fff" stroke-width="1.300" stroke-dasharray="2.400 1.400"/><circle cx="11" cy="10.600" r="4.800" fill="#fff"/><path d="M5.800 14.200l-1.200 3.600 3.800-1.200z" fill="#fff"/></svg>
 <svg style="left:1747px;top:11px" width="22" height="20" viewBox="0 0 22 20"><path d="M3.400 12.500A7 7 0 0 1 14 4.200M16.600 7.500A7 7 0 0 1 6 15.800" fill="none" stroke="#f0f0f4" stroke-width="1.700"/><path d="M12.500 1.800l3.300 3.400-4.300 1.100zM7.500 18.200l-3.300-3.400 4.300-1.100z" fill="#f0f0f4"/><path d="M4.500 16L15.500 4" stroke="#f0f0f4" stroke-width="1.500"/><circle cx="19" cy="17" r="2" fill="#5a5cff"/></svg>
 <svg style="left:1778px;top:12px" width="18" height="18" viewBox="0 0 18 18"><path d="M9 .5l2.200 2.300 3.100-.5.500 3.100L17.500 7 16 9.500l1.500 2.500-2.700 1.600-.5 3.100-3.100-.5L9 18.500l-2.200-2.300-3.100.5-.5-3.100L.5 12 2 9.500.5 7l2.700-1.600.5-3.100 3.100.5z" fill="#f0f0f4"/><circle cx="9" cy="9.500" r="4.600" fill="#2a2236"/><path d="M9 6.300a3.200 3.200 0 0 1 0 6.400z" fill="#f0f0f4"/><circle cx="9" cy="9.500" r="3.200" fill="none" stroke="#f0f0f4" stroke-width=".9"/></svg>
 <svg style="left:1810px;top:18px" width="11" height="6" viewBox="0 0 11 6"><path d="M0 6L5.500 0 11 6z" fill="#f0f0f4"/></svg>
 <div class="a" style="left:1834px;top:5px;font-size:16.500px;line-height:20px;letter-spacing:.3px;color:#e8e8ec">3:11 PM</div>
 <div class="a" style="left:1844px;top:22px;font-size:12.600px;line-height:15px;letter-spacing:.5px;color:#e8e8ec">11/2/25</div>
</div>
</body></html>
